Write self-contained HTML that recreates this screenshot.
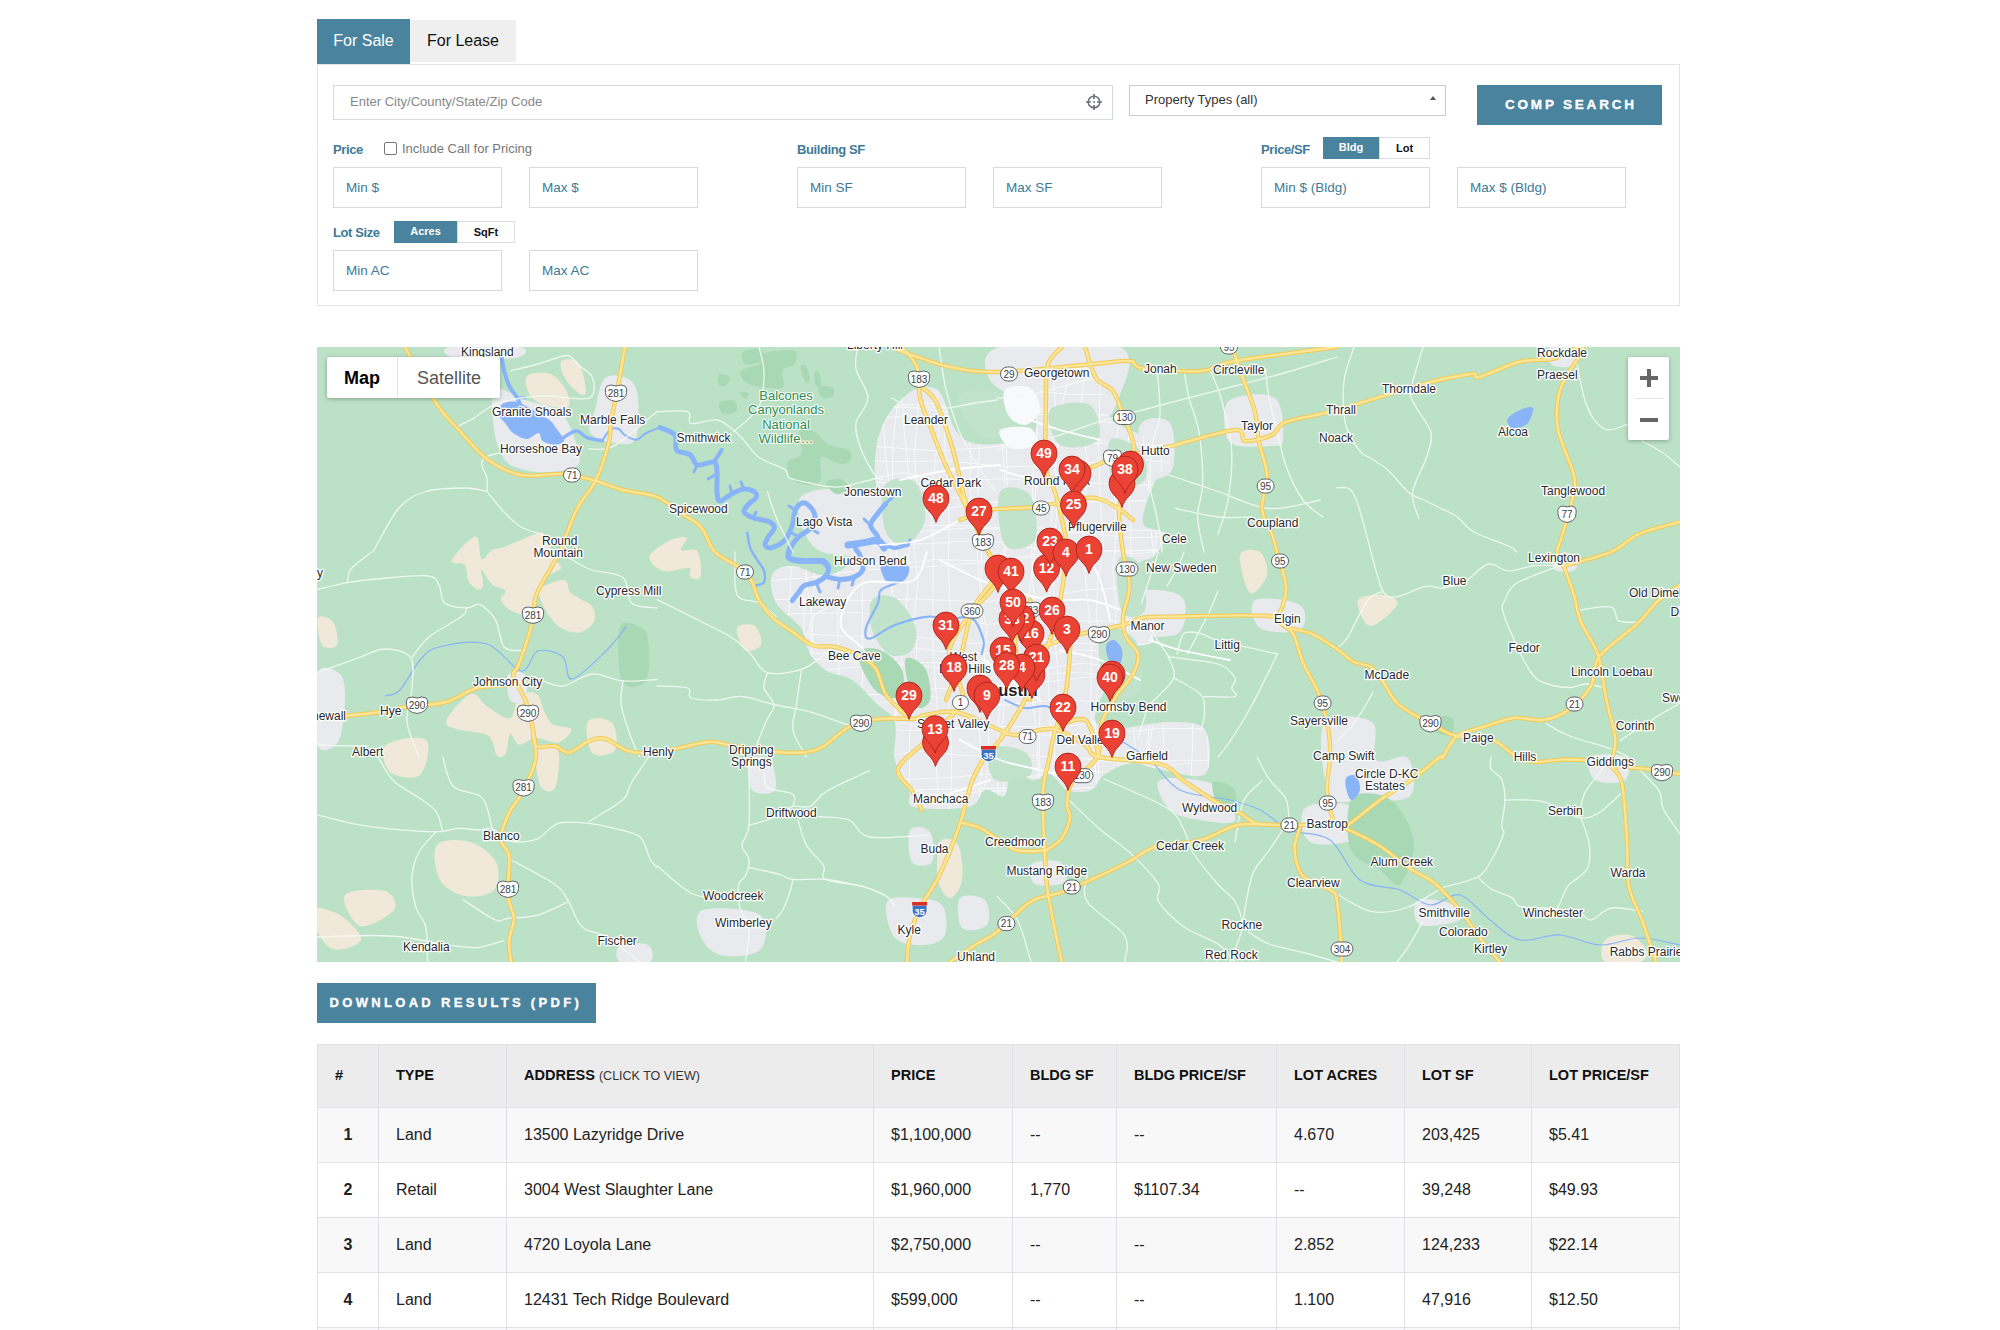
<!DOCTYPE html>
<html><head><meta charset="utf-8">
<style>
*{box-sizing:border-box;margin:0;padding:0}
html,body{width:2000px;height:1330px;overflow:hidden;background:#fff;font-family:"Liberation Sans",sans-serif}
.abs{position:absolute}
.tab{position:absolute;top:19px;height:45px;font-size:16px;line-height:44px;text-align:center}
.t1{left:317px;width:93px;background:#4a839e;color:#fff}
.t2{left:410px;width:106px;top:20px;height:42px;background:#efefef;color:#111;line-height:41px}
.panel{position:absolute;left:317px;top:64px;width:1363px;height:242px;border:1px solid #e3e5e8;border-top:1px solid #e3e5e8}
.inp{position:absolute;border:1px solid #d6d9dd;background:#fff}
.ph{position:absolute;font-size:13.5px;color:#3d7a97}
.lbl{position:absolute;font-size:13px;font-weight:bold;color:#3d7a97;letter-spacing:-0.4px;margin-top:1px}
.tg{position:absolute;height:22px;font-size:11px;font-weight:bold;text-align:center;line-height:21px}
.tgon{background:#4a839e;color:#fff}
.tgoff{background:#fff;color:#111;border:1px solid #dcdcdc}
.btn{position:absolute;background:#4a839e;color:#fff;font-weight:bold;font-size:13.5px;text-align:center;white-space:nowrap;-webkit-text-stroke:0.35px #fff}
#map{position:absolute;left:317px;top:347px;width:1363px;height:615px;background:#bbe2c6;overflow:hidden}
table{position:absolute;left:317px;top:1044px;border-collapse:collapse;width:1363px}
td,th{border:1px solid #dfe1e6;text-align:left;padding:0 0 0 17px}
th{background:#ececec;height:63px;font-size:14.5px;color:#111;padding-bottom:3px}
td{height:55px;font-size:16px;color:#222}
tr:nth-child(even) td{background:#f8f8f8}
tr:nth-child(odd) td{background:#fff}
td.n{text-align:center;padding:0;font-weight:bold}
th small{font-weight:normal;font-size:12.5px;color:#333}
</style></head><body>
<div class="tab t1">For Sale</div>
<div class="tab t2">For Lease</div>
<div class="panel"></div>

<div class="inp" style="left:333px;top:85px;width:780px;height:35px"></div>
<div class="ph" style="left:350px;top:94px;font-size:13px;color:#888">Enter City/County/State/Zip Code</div>
<svg class="abs" style="left:1085px;top:92.5px" width="18" height="18" viewBox="0 0 18 18"><circle cx="9" cy="9" r="5.8" fill="none" stroke="#6b7079" stroke-width="1.5"/><path d="M9 1v5M9 12v5M1 9h5M12 9h5" stroke="#6b7079" stroke-width="1.7"/><circle cx="9" cy="9" r="0.9" fill="#6b7079"/></svg>

<div class="inp" style="left:1129px;top:85px;width:317px;height:31px;border-color:#ccc"></div>
<div class="ph" style="left:1145px;top:92px;font-size:13px;color:#333">Property Types (all)</div>
<div class="abs" style="left:1430px;top:96px;width:0;height:0;border-left:3px solid transparent;border-right:3px solid transparent;border-bottom:4px solid #555"></div>

<div class="btn" style="left:1477px;top:85px;width:185px;height:40px;line-height:40px;letter-spacing:2.8px;text-indent:2.8px">COMP SEARCH</div>

<div class="lbl" style="left:333px;top:141px">Price</div>
<div class="abs" style="left:384px;top:142px;width:13px;height:13px;border:1px solid #777;border-radius:2px"></div>
<div class="ph" style="left:402px;top:141px;font-size:13px;color:#777">Include Call for Pricing</div>
<div class="lbl" style="left:797px;top:141px">Building SF</div>
<div class="lbl" style="left:1261px;top:141px">Price/SF</div>
<div class="tg tgon" style="left:1323px;top:137px;width:56px">Bldg</div>
<div class="tg tgoff" style="left:1379px;top:137px;width:51px">Lot</div>

<div class="inp" style="left:333px;top:167px;width:169px;height:41px"></div>
<div class="ph" style="left:346px;top:180px">Min $</div>
<div class="inp" style="left:529px;top:167px;width:169px;height:41px"></div>
<div class="ph" style="left:542px;top:180px">Max $</div>
<div class="inp" style="left:797px;top:167px;width:169px;height:41px"></div>
<div class="ph" style="left:810px;top:180px">Min SF</div>
<div class="inp" style="left:993px;top:167px;width:169px;height:41px"></div>
<div class="ph" style="left:1006px;top:180px">Max SF</div>
<div class="inp" style="left:1261px;top:167px;width:169px;height:41px"></div>
<div class="ph" style="left:1274px;top:180px">Min $ (Bldg)</div>
<div class="inp" style="left:1457px;top:167px;width:169px;height:41px"></div>
<div class="ph" style="left:1470px;top:180px">Max $ (Bldg)</div>

<div class="lbl" style="left:333px;top:224px">Lot Size</div>
<div class="tg tgon" style="left:394px;top:221px;width:63px">Acres</div>
<div class="tg tgoff" style="left:457px;top:221px;width:58px">SqFt</div>
<div class="inp" style="left:333px;top:250px;width:169px;height:41px"></div>
<div class="ph" style="left:346px;top:263px">Min AC</div>
<div class="inp" style="left:529px;top:250px;width:169px;height:41px"></div>
<div class="ph" style="left:542px;top:263px">Max AC</div>

<div id="map"><svg width="1363" height="615" viewBox="317 347 1363 615" style="position:absolute;left:0;top:0;display:block">
<rect x="317" y="347" width="1363" height="615" fill="#bbe2c6"/>
<path d="M527.0,376.0 C530.3,372.5 543.5,371.7 550.0,374.0 C556.5,376.3 563.0,384.5 566.0,390.0 C569.0,395.5 571.5,404.5 568.0,407.0 C564.5,409.5 551.3,407.0 545.0,405.0 C538.7,403.0 533.0,399.8 530.0,395.0 C527.0,390.2 523.7,379.5 527.0,376.0Z" fill="#f0e9d9"/>
<path d="M561.0,362.0 C563.0,359.0 573.8,357.3 578.0,362.0 C582.2,366.7 585.7,384.7 586.0,390.0 C586.3,395.3 583.3,395.7 580.0,394.0 C576.7,392.3 569.2,385.3 566.0,380.0 C562.8,374.7 559.0,365.0 561.0,362.0Z" fill="#f0e9d9"/>
<path d="M451.5,560.5 C453.2,555.8 470.5,536.8 475.5,536.5 C480.5,536.2 478.8,556.8 481.5,559.0 C484.2,561.2 488.2,552.0 492.0,550.0 C495.8,548.0 496.5,549.8 504.0,547.0 C511.5,544.2 530.2,535.5 537.0,533.5 C543.8,531.5 541.5,530.8 544.5,535.0 C547.5,539.2 552.2,553.5 555.0,559.0 C557.8,564.5 562.0,565.2 561.0,568.0 C560.0,570.8 552.5,572.2 549.0,575.5 C545.5,578.8 542.5,582.8 540.0,587.5 C537.5,592.2 535.5,599.2 534.0,604.0 C532.5,608.8 535.0,615.0 531.0,616.0 C527.0,617.0 515.0,612.8 510.0,610.0 C505.0,607.2 501.8,602.8 501.0,599.5 C500.2,596.2 507.0,593.0 505.5,590.5 C504.0,588.0 496.0,588.0 492.0,584.5 C488.0,581.0 483.0,569.2 481.5,569.5 C480.0,569.8 483.8,582.8 483.0,586.0 C482.2,589.2 479.5,590.0 477.0,589.0 C474.5,588.0 470.0,584.0 468.0,580.0 C466.0,576.0 467.8,568.2 465.0,565.0 C462.2,561.8 449.8,565.2 451.5,560.5Z" fill="#f0e9d9"/>
<path d="M540.0,589.0 C543.5,584.8 559.0,579.5 564.0,580.0 C569.0,580.5 567.5,589.0 570.0,592.0 C572.5,595.0 575.2,595.5 579.0,598.0 C582.8,600.5 590.0,603.0 592.5,607.0 C595.0,611.0 596.2,617.8 594.0,622.0 C591.8,626.2 584.5,631.5 579.0,632.5 C573.5,633.5 565.8,630.5 561.0,628.0 C556.2,625.5 553.5,621.2 550.5,617.5 C547.5,613.8 544.8,610.2 543.0,605.5 C541.2,600.8 536.5,593.2 540.0,589.0Z" fill="#f0e9d9"/>
<path d="M649.5,556.0 C651.0,550.8 665.8,542.5 672.0,539.5 C678.2,536.5 685.5,536.2 687.0,538.0 C688.5,539.8 679.2,547.8 681.0,550.0 C682.8,552.2 694.2,547.0 697.5,551.5 C700.8,556.0 701.8,572.8 700.5,577.0 C699.2,581.2 692.0,578.5 690.0,577.0 C688.0,575.5 693.0,569.0 688.5,568.0 C684.0,567.0 669.5,573.0 663.0,571.0 C656.5,569.0 648.0,561.2 649.5,556.0Z" fill="#f0e9d9"/>
<path d="M737.0,628.0 C738.7,624.0 751.0,623.2 755.0,626.0 C759.0,628.8 762.7,641.0 761.0,645.0 C759.3,649.0 749.0,652.8 745.0,650.0 C741.0,647.2 735.3,632.0 737.0,628.0Z" fill="#f0e9d9"/>
<path d="M318.0,618.0 C319.8,614.2 329.8,617.5 333.0,622.0 C336.2,626.5 338.8,641.2 337.0,645.0 C335.2,648.8 325.2,649.5 322.0,645.0 C318.8,640.5 316.2,621.8 318.0,618.0Z" fill="#f0e9d9"/>
<path d="M446.5,720.5 C448.7,714.6 463.7,696.2 470.6,694.0 C477.6,691.8 481.6,703.2 488.2,707.3 C494.8,711.3 505.1,720.1 510.2,718.3 C515.3,716.5 514.6,700.3 519.0,696.3 C523.4,692.2 532.1,691.0 536.5,694.0 C540.9,697.0 542.4,708.8 545.3,714.0 C548.2,719.2 549.6,722.5 554.0,725.0 C558.4,727.5 570.9,726.4 571.6,729.3 C572.3,732.2 564.2,740.9 558.4,742.4 C552.5,743.9 543.1,737.6 536.5,738.0 C529.9,738.4 523.4,745.3 519.0,744.6 C514.6,743.9 512.4,732.2 510.2,733.7 C508.0,735.2 508.0,749.8 505.8,753.4 C503.6,757.0 499.9,758.5 497.0,755.6 C494.1,752.7 494.8,740.2 488.2,735.8 C481.6,731.4 464.4,731.8 457.5,729.3 C450.6,726.8 444.3,726.4 446.5,720.5Z" fill="#f0e9d9"/>
<path d="M537.0,748.0 C540.0,742.2 555.0,743.3 558.0,750.0 C561.0,756.7 558.0,782.2 555.0,788.0 C552.0,793.8 543.0,791.7 540.0,785.0 C537.0,778.3 534.0,753.8 537.0,748.0Z" fill="#f0e9d9"/>
<path d="M588.0,721.0 C591.3,716.0 607.5,718.2 612.0,723.0 C616.5,727.8 618.3,745.0 615.0,750.0 C611.7,755.0 596.5,757.8 592.0,753.0 C587.5,748.2 584.7,726.0 588.0,721.0Z" fill="#f0e9d9"/>
<path d="M386.0,745.0 C392.0,739.7 420.3,735.0 426.0,740.0 C431.7,745.0 426.0,769.7 420.0,775.0 C414.0,780.3 395.7,777.0 390.0,772.0 C384.3,767.0 380.0,750.3 386.0,745.0Z" fill="#f0e9d9"/>
<path d="M437.0,845.0 C442.0,838.7 460.2,839.2 470.0,842.0 C479.8,844.8 492.0,854.0 496.0,862.0 C500.0,870.0 499.2,884.3 494.0,890.0 C488.8,895.7 474.0,897.7 465.0,896.0 C456.0,894.3 444.7,888.5 440.0,880.0 C435.3,871.5 432.0,851.3 437.0,845.0Z" fill="#f0e9d9"/>
<path d="M345.0,895.0 C349.2,889.2 376.8,888.5 385.0,891.0 C393.2,893.5 398.2,904.2 394.0,910.0 C389.8,915.8 368.2,928.5 360.0,926.0 C351.8,923.5 340.8,900.8 345.0,895.0Z" fill="#f0e9d9"/>
<path d="M310.0,910.0 C311.7,904.5 331.5,910.0 340.0,915.0 C348.5,920.0 362.7,934.5 361.0,940.0 C359.3,945.5 338.5,953.0 330.0,948.0 C321.5,943.0 308.3,915.5 310.0,910.0Z" fill="#f0e9d9"/>
<path d="M1240.0,555.0 C1241.7,548.2 1255.5,548.7 1260.0,552.0 C1264.5,555.3 1268.7,568.2 1267.0,575.0 C1265.3,581.8 1254.5,596.3 1250.0,593.0 C1245.5,589.7 1238.3,561.8 1240.0,555.0Z" fill="#f0e9d9"/>
<path d="M1358.0,600.0 C1360.5,594.8 1378.5,594.2 1385.0,595.0 C1391.5,595.8 1399.5,599.8 1397.0,605.0 C1394.5,610.2 1376.5,626.8 1370.0,626.0 C1363.5,625.2 1355.5,605.2 1358.0,600.0Z" fill="#f0e9d9"/>
<path d="M1605.0,940.0 C1609.2,935.5 1623.2,933.3 1630.0,935.0 C1636.8,936.7 1644.3,945.5 1646.0,950.0 C1647.7,954.5 1646.8,960.0 1640.0,962.0 C1633.2,964.0 1610.8,965.7 1605.0,962.0 C1599.2,958.3 1600.8,944.5 1605.0,940.0Z" fill="#f0e9d9"/>
<path d="M940.0,842.0 C943.3,836.2 954.3,838.7 958.0,845.0 C961.7,851.3 963.3,871.2 962.0,880.0 C960.7,888.8 954.0,898.0 950.0,898.0 C946.0,898.0 939.7,889.3 938.0,880.0 C936.3,870.7 936.7,847.8 940.0,842.0Z" fill="#f0e9d9"/>
<path d="M912.0,391.0 C920.9,386.2 931.3,384.4 938.6,391.0 C945.9,397.6 949.4,421.9 956.0,430.7 C962.6,439.5 967.0,442.5 978.0,444.0 C989.0,445.5 1012.8,442.8 1022.0,439.5 C1031.2,436.2 1029.3,433.9 1033.0,424.0 C1036.7,414.1 1038.5,389.9 1044.0,380.0 C1049.5,370.1 1056.8,365.7 1066.0,364.6 C1075.2,363.5 1092.3,365.3 1099.0,373.4 C1105.7,381.5 1100.5,403.4 1106.0,413.0 C1111.5,422.6 1124.0,426.3 1132.0,430.7 C1140.0,435.1 1147.3,435.1 1154.0,439.5 C1160.7,443.9 1172.0,449.6 1172.0,457.0 C1172.0,464.4 1158.8,472.6 1154.0,483.6 C1149.2,494.6 1141.1,514.6 1143.0,523.0 C1144.9,531.4 1163.7,528.5 1165.5,534.0 C1167.3,539.5 1158.8,550.5 1154.0,556.0 C1149.2,561.5 1139.8,557.8 1137.0,567.0 C1134.2,576.2 1134.2,598.8 1137.0,611.0 C1139.8,623.2 1155.2,633.5 1154.0,640.0 C1152.8,646.5 1137.3,643.3 1130.0,650.0 C1122.7,656.7 1115.8,668.3 1110.0,680.0 C1104.2,691.7 1093.3,712.0 1095.0,720.0 C1096.7,728.0 1107.5,727.7 1120.0,728.0 C1132.5,728.3 1155.8,721.7 1170.0,722.0 C1184.2,722.3 1199.2,721.3 1205.0,730.0 C1210.8,738.7 1212.7,767.5 1205.0,774.0 C1197.3,780.5 1171.2,770.8 1159.0,769.0 C1146.8,767.2 1141.0,762.2 1132.0,763.0 C1123.0,763.8 1111.8,769.5 1105.0,774.0 C1098.2,778.5 1097.3,787.3 1091.0,790.0 C1084.7,792.7 1073.8,792.7 1067.0,790.0 C1060.2,787.3 1055.5,775.7 1050.0,774.0 C1044.5,772.3 1040.3,780.0 1034.0,780.0 C1027.7,780.0 1017.0,771.3 1012.0,774.0 C1007.0,776.7 1008.5,793.3 1004.0,796.0 C999.5,798.7 990.8,788.2 985.0,790.0 C979.2,791.8 980.8,804.2 969.0,807.0 C957.2,809.8 924.0,809.8 914.0,807.0 C904.0,804.2 912.2,797.8 909.0,790.0 C905.8,782.2 897.3,771.3 895.0,760.0 C892.7,748.7 897.8,731.2 895.0,722.0 C892.2,712.8 885.2,712.0 878.0,705.0 C870.8,698.0 860.5,685.7 852.0,680.0 C843.5,674.3 834.0,675.3 827.0,671.0 C820.0,666.7 814.3,661.2 810.0,654.0 C805.7,646.8 806.7,636.5 801.0,628.0 C795.3,619.5 780.8,611.8 776.0,603.0 C771.2,594.2 769.3,581.2 772.0,575.0 C774.7,568.8 782.3,566.0 792.0,566.0 C801.7,566.0 817.0,578.0 830.0,575.0 C843.0,572.0 858.3,557.2 870.0,548.0 C881.7,538.8 898.3,528.0 900.0,520.0 C901.7,512.0 884.2,510.0 880.0,500.0 C875.8,490.0 874.2,473.3 875.0,460.0 C875.8,446.7 878.8,431.5 885.0,420.0 C891.2,408.5 903.1,395.8 912.0,391.0Z" fill="#e8eaed"/>
<path d="M878.0,437.0 C880.5,432.7 894.3,434.7 898.0,440.0 C901.7,445.3 902.5,464.7 900.0,469.0 C897.5,473.3 886.7,471.3 883.0,466.0 C879.3,460.7 875.5,441.3 878.0,437.0Z" fill="#e8eaed"/>
<path d="M882.0,467.0 C883.8,465.2 892.8,466.0 895.0,468.0 C897.2,470.0 896.8,477.2 895.0,479.0 C893.2,480.8 886.2,481.0 884.0,479.0 C881.8,477.0 880.2,468.8 882.0,467.0Z" fill="#e8eaed"/>
<path d="M800.0,498.0 C806.3,488.5 835.0,487.7 850.0,488.0 C865.0,488.3 879.7,493.0 890.0,500.0 C900.3,507.0 909.5,521.3 912.0,530.0 C914.5,538.7 915.3,547.7 905.0,552.0 C894.7,556.3 865.5,557.2 850.0,556.0 C834.5,554.8 820.3,554.7 812.0,545.0 C803.7,535.3 793.7,507.5 800.0,498.0Z" fill="#e8eaed"/>
<path d="M910.0,830.0 C913.0,825.0 926.3,826.7 930.0,832.0 C933.7,837.3 935.0,857.0 932.0,862.0 C929.0,867.0 915.7,867.3 912.0,862.0 C908.3,856.7 907.0,835.0 910.0,830.0Z" fill="#e8eaed"/>
<path d="M887.0,902.0 C890.3,895.3 905.8,897.5 915.0,898.0 C924.2,898.5 937.0,898.8 942.0,905.0 C947.0,911.2 947.8,928.3 945.0,935.0 C942.2,941.7 933.3,944.5 925.0,945.0 C916.7,945.5 901.3,945.2 895.0,938.0 C888.7,930.8 883.7,908.7 887.0,902.0Z" fill="#e8eaed"/>
<path d="M960.0,898.0 C963.8,893.3 980.5,895.5 985.0,900.0 C989.5,904.5 990.8,920.3 987.0,925.0 C983.2,929.7 966.5,932.5 962.0,928.0 C957.5,923.5 956.2,902.7 960.0,898.0Z" fill="#e8eaed"/>
<path d="M605.0,378.0 C610.8,373.0 624.5,376.3 630.0,380.0 C635.5,383.7 637.2,390.0 638.0,400.0 C638.8,410.0 639.7,433.0 635.0,440.0 C630.3,447.0 617.5,443.3 610.0,442.0 C602.5,440.7 592.5,437.3 590.0,432.0 C587.5,426.7 592.5,419.0 595.0,410.0 C597.5,401.0 599.2,383.0 605.0,378.0Z" fill="#e8eaed"/>
<path d="M495.0,390.0 C500.2,385.0 514.2,396.3 525.0,400.0 C535.8,403.7 551.7,405.3 560.0,412.0 C568.3,418.7 572.0,431.2 575.0,440.0 C578.0,448.8 582.2,459.7 578.0,465.0 C573.8,470.3 558.8,471.2 550.0,472.0 C541.2,472.8 532.5,472.0 525.0,470.0 C517.5,468.0 510.2,466.7 505.0,460.0 C499.8,453.3 495.7,441.7 494.0,430.0 C492.3,418.3 489.8,395.0 495.0,390.0Z" fill="#e8eaed"/>
<path d="M450.0,347.0 C460.8,345.2 509.2,345.2 520.0,347.0 C530.8,348.8 525.8,356.2 515.0,358.0 C504.2,359.8 465.8,359.8 455.0,358.0 C444.2,356.2 439.2,348.8 450.0,347.0Z" fill="#e8eaed"/>
<path d="M1000.0,347.0 C1021.7,341.5 1100.3,338.2 1120.0,347.0 C1139.7,355.8 1123.0,385.2 1118.0,400.0 C1113.0,414.8 1099.7,432.7 1090.0,436.0 C1080.3,439.3 1070.0,425.2 1060.0,420.0 C1050.0,414.8 1041.7,411.7 1030.0,405.0 C1018.3,398.3 995.0,389.7 990.0,380.0 C985.0,370.3 978.3,352.5 1000.0,347.0Z" fill="#e8eaed"/>
<path d="M1230.0,400.0 C1238.3,394.7 1266.2,391.3 1275.0,398.0 C1283.8,404.7 1283.8,432.0 1283.0,440.0 C1282.2,448.0 1278.0,445.2 1270.0,446.0 C1262.0,446.8 1242.5,447.7 1235.0,445.0 C1227.5,442.3 1225.8,437.5 1225.0,430.0 C1224.2,422.5 1221.7,405.3 1230.0,400.0Z" fill="#e8eaed"/>
<path d="M1140.0,425.0 C1144.2,416.3 1164.7,415.5 1170.0,423.0 C1175.3,430.5 1176.2,461.3 1172.0,470.0 C1167.8,478.7 1150.3,482.5 1145.0,475.0 C1139.7,467.5 1135.8,433.7 1140.0,425.0Z" fill="#e8eaed"/>
<path d="M1130.0,595.0 C1134.2,589.2 1151.0,589.2 1160.0,590.0 C1169.0,590.8 1180.7,593.0 1184.0,600.0 C1187.3,607.0 1185.7,626.0 1180.0,632.0 C1174.3,638.0 1157.5,637.2 1150.0,636.0 C1142.5,634.8 1138.3,631.8 1135.0,625.0 C1131.7,618.2 1125.8,600.8 1130.0,595.0Z" fill="#e8eaed"/>
<path d="M1255.0,600.0 C1261.7,596.2 1292.5,600.0 1300.0,605.0 C1307.5,610.0 1306.7,626.2 1300.0,630.0 C1293.3,633.8 1267.5,633.0 1260.0,628.0 C1252.5,623.0 1248.3,603.8 1255.0,600.0Z" fill="#e8eaed"/>
<path d="M1324.0,724.0 C1331.0,711.8 1363.3,716.0 1372.0,722.0 C1380.7,728.0 1370.0,754.0 1376.0,760.0 C1382.0,766.0 1402.3,752.0 1408.0,758.0 C1413.7,764.0 1417.2,789.0 1410.0,796.0 C1402.8,803.0 1378.3,800.2 1365.0,800.0 C1351.7,799.8 1336.8,807.7 1330.0,795.0 C1323.2,782.3 1317.0,736.2 1324.0,724.0Z" fill="#e8eaed"/>
<path d="M1305.0,808.0 C1311.7,802.0 1341.5,801.0 1350.0,806.0 C1358.5,811.0 1362.7,832.0 1356.0,838.0 C1349.3,844.0 1318.5,847.0 1310.0,842.0 C1301.5,837.0 1298.3,814.0 1305.0,808.0Z" fill="#e8eaed"/>
<path d="M1160.0,780.0 C1167.5,775.8 1202.5,778.3 1215.0,785.0 C1227.5,791.7 1237.5,814.2 1235.0,820.0 C1232.5,825.8 1210.8,821.7 1200.0,820.0 C1189.2,818.3 1176.7,816.7 1170.0,810.0 C1163.3,803.3 1152.5,784.2 1160.0,780.0Z" fill="#e8eaed"/>
<path d="M1418.0,900.0 C1423.8,896.7 1448.0,901.7 1455.0,905.0 C1462.0,908.3 1465.8,916.7 1460.0,920.0 C1454.2,923.3 1427.0,928.3 1420.0,925.0 C1413.0,921.7 1412.2,903.3 1418.0,900.0Z" fill="#e8eaed"/>
<path d="M703.0,910.0 C713.0,906.7 750.5,908.3 760.0,915.0 C769.5,921.7 766.7,943.3 760.0,950.0 C753.3,956.7 730.0,957.5 720.0,955.0 C710.0,952.5 702.8,942.5 700.0,935.0 C697.2,927.5 693.0,913.3 703.0,910.0Z" fill="#e8eaed"/>
<path d="M750.0,760.0 C753.0,755.0 765.8,755.0 770.0,760.0 C774.2,765.0 778.0,785.0 775.0,790.0 C772.0,795.0 756.2,795.0 752.0,790.0 C747.8,785.0 747.0,765.0 750.0,760.0Z" fill="#e8eaed"/>
<path d="M1032.0,864.0 C1036.2,860.3 1054.5,859.0 1060.0,862.0 C1065.5,865.0 1069.2,878.3 1065.0,882.0 C1060.8,885.7 1040.5,887.0 1035.0,884.0 C1029.5,881.0 1027.8,867.7 1032.0,864.0Z" fill="#e8eaed"/>
<path d="M620.0,945.0 C624.7,942.2 643.0,942.2 648.0,945.0 C653.0,947.8 654.7,959.2 650.0,962.0 C645.3,964.8 625.0,964.8 620.0,962.0 C615.0,959.2 615.3,947.8 620.0,945.0Z" fill="#e8eaed"/>
<path d="M508.0,675.0 C510.5,670.8 522.2,670.8 525.0,675.0 C527.8,679.2 527.5,695.8 525.0,700.0 C522.5,704.2 512.8,704.2 510.0,700.0 C507.2,695.8 505.5,679.2 508.0,675.0Z" fill="#e8eaed"/>
<path d="M317.0,674.0 C320.8,662.3 335.3,669.7 340.0,674.0 C344.7,678.3 345.3,688.7 345.0,700.0 C344.7,711.3 342.7,734.7 338.0,742.0 C333.3,749.3 320.5,755.3 317.0,744.0 C313.5,732.7 313.2,685.7 317.0,674.0Z" fill="#e8eaed"/>
<path d="M1550.0,347.0 C1553.8,344.0 1570.8,344.0 1575.0,347.0 C1579.2,350.0 1578.8,362.0 1575.0,365.0 C1571.2,368.0 1556.2,368.0 1552.0,365.0 C1547.8,362.0 1546.2,350.0 1550.0,347.0Z" fill="#e8eaed"/>
<path d="M1555.0,555.0 C1558.3,552.5 1571.7,552.5 1575.0,555.0 C1578.3,557.5 1578.3,567.5 1575.0,570.0 C1571.7,572.5 1558.3,572.5 1555.0,570.0 C1551.7,567.5 1551.7,557.5 1555.0,555.0Z" fill="#e8eaed"/>
<path d="M1590.0,757.0 C1595.0,753.2 1619.2,753.2 1625.0,757.0 C1630.8,760.8 1630.0,776.2 1625.0,780.0 C1620.0,783.8 1600.8,783.8 1595.0,780.0 C1589.2,776.2 1585.0,760.8 1590.0,757.0Z" fill="#e8eaed"/>
<clipPath id="austin"><path d="M912.0,391.0 C920.9,386.2 931.3,384.4 938.6,391.0 C945.9,397.6 949.4,421.9 956.0,430.7 C962.6,439.5 967.0,442.5 978.0,444.0 C989.0,445.5 1012.8,442.8 1022.0,439.5 C1031.2,436.2 1029.3,433.9 1033.0,424.0 C1036.7,414.1 1038.5,389.9 1044.0,380.0 C1049.5,370.1 1056.8,365.7 1066.0,364.6 C1075.2,363.5 1092.3,365.3 1099.0,373.4 C1105.7,381.5 1100.5,403.4 1106.0,413.0 C1111.5,422.6 1124.0,426.3 1132.0,430.7 C1140.0,435.1 1147.3,435.1 1154.0,439.5 C1160.7,443.9 1172.0,449.6 1172.0,457.0 C1172.0,464.4 1158.8,472.6 1154.0,483.6 C1149.2,494.6 1141.1,514.6 1143.0,523.0 C1144.9,531.4 1163.7,528.5 1165.5,534.0 C1167.3,539.5 1158.8,550.5 1154.0,556.0 C1149.2,561.5 1139.8,557.8 1137.0,567.0 C1134.2,576.2 1134.2,598.8 1137.0,611.0 C1139.8,623.2 1155.2,633.5 1154.0,640.0 C1152.8,646.5 1137.3,643.3 1130.0,650.0 C1122.7,656.7 1115.8,668.3 1110.0,680.0 C1104.2,691.7 1093.3,712.0 1095.0,720.0 C1096.7,728.0 1107.5,727.7 1120.0,728.0 C1132.5,728.3 1155.8,721.7 1170.0,722.0 C1184.2,722.3 1199.2,721.3 1205.0,730.0 C1210.8,738.7 1212.7,767.5 1205.0,774.0 C1197.3,780.5 1171.2,770.8 1159.0,769.0 C1146.8,767.2 1141.0,762.2 1132.0,763.0 C1123.0,763.8 1111.8,769.5 1105.0,774.0 C1098.2,778.5 1097.3,787.3 1091.0,790.0 C1084.7,792.7 1073.8,792.7 1067.0,790.0 C1060.2,787.3 1055.5,775.7 1050.0,774.0 C1044.5,772.3 1040.3,780.0 1034.0,780.0 C1027.7,780.0 1017.0,771.3 1012.0,774.0 C1007.0,776.7 1008.5,793.3 1004.0,796.0 C999.5,798.7 990.8,788.2 985.0,790.0 C979.2,791.8 980.8,804.2 969.0,807.0 C957.2,809.8 924.0,809.8 914.0,807.0 C904.0,804.2 912.2,797.8 909.0,790.0 C905.8,782.2 897.3,771.3 895.0,760.0 C892.7,748.7 897.8,731.2 895.0,722.0 C892.2,712.8 885.2,712.0 878.0,705.0 C870.8,698.0 860.5,685.7 852.0,680.0 C843.5,674.3 834.0,675.3 827.0,671.0 C820.0,666.7 814.3,661.2 810.0,654.0 C805.7,646.8 806.7,636.5 801.0,628.0 C795.3,619.5 780.8,611.8 776.0,603.0 C771.2,594.2 769.3,581.2 772.0,575.0 C774.7,568.8 782.3,566.0 792.0,566.0 C801.7,566.0 817.0,578.0 830.0,575.0 C843.0,572.0 858.3,557.2 870.0,548.0 C881.7,538.8 898.3,528.0 900.0,520.0 C901.7,512.0 884.2,510.0 880.0,500.0 C875.8,490.0 874.2,473.3 875.0,460.0 C875.8,446.7 878.8,431.5 885.0,420.0 C891.2,408.5 903.1,395.8 912.0,391.0Z"/></clipPath>
<g clip-path="url(#austin)" fill="none" stroke="#fafbfc" stroke-width="1" opacity="0.85">
<path d="M760.0,358.2 L790.3,360.0 L817.8,360.5 L855.6,355.2 L898.4,349.6 L938.6,344.5 L966.7,343.6 L1020.7,339.0 L1053.5,340.6 L1111.6,341.5 L1150.5,347.2 L1177.2,351.5 L1212.3,347.2"/>
<path d="M760.0,378.2 L791.3,379.1 L838.7,377.6 L882.9,372.4 L909.9,368.8 L958.8,368.0 L994.8,369.0 L1035.6,366.6 L1088.4,369.0 L1122.0,369.9 L1165.3,374.4 L1215.9,371.8"/>
<path d="M760.0,389.2 L811.5,385.0 L853.6,379.5 L902.0,382.7 L947.1,387.2 L983.0,389.5 L1028.8,390.5 L1069.8,394.5 L1127.9,394.2 L1176.1,389.0"/>
<path d="M760.0,409.9 L813.8,407.3 L852.3,409.4 L878.1,408.9 L908.9,404.3 L936.0,407.5 L965.5,404.5 L1004.2,409.0 L1032.0,408.4 L1076.3,413.0 L1129.9,417.3 L1164.7,416.3 L1202.2,420.9"/>
<path d="M760.0,416.8 L793.1,413.6 L835.1,414.6 L869.3,408.7 L909.0,407.1 L953.8,412.5 L1002.9,412.7 L1049.6,414.8 L1076.4,419.6 L1128.7,424.1 L1181.7,422.8"/>
<path d="M760.0,436.3 L787.2,431.2 L819.5,427.1 L856.4,421.7 L881.4,417.5 L909.9,415.9 L935.8,420.4 L982.3,416.2 L1016.2,414.4 L1053.9,409.8 L1108.6,415.7 L1149.9,415.5 L1177.9,410.8 L1214.9,408.0"/>
<path d="M760.0,445.2 L818.3,445.6 L848.4,446.1 L874.4,446.4 L933.6,450.8 L983.0,447.9 L1020.8,443.9 L1072.8,444.3 L1125.1,442.3 L1157.9,446.0 L1217.4,450.2"/>
<path d="M760.0,467.4 L792.9,467.6 L830.4,462.0 L856.4,459.3 L890.4,461.6 L948.9,461.0 L1006.7,466.8 L1065.1,465.2 L1097.8,461.9 L1129.7,458.4 L1176.6,463.2"/>
<path d="M760.0,481.5 L813.0,476.5 L861.1,481.5 L913.5,484.5 L955.2,480.6 L1007.8,478.6 L1060.9,484.3 L1099.7,483.1 L1157.9,485.8 L1188.8,481.3 L1219.1,486.2"/>
<path d="M760.0,498.3 L819.3,500.2 L856.6,500.7 L886.2,494.9 L945.1,496.7 L988.6,501.9 L1028.8,506.4 L1082.7,502.9 L1116.5,500.4 L1149.9,501.5 L1184.0,500.5 L1213.6,505.4"/>
<path d="M760.0,510.8 L816.7,509.9 L873.8,509.9 L917.4,510.2 L943.0,509.5 L974.4,503.5 L1027.4,499.6 L1069.0,502.3 L1113.5,500.2 L1156.6,500.9 L1209.1,496.1"/>
<path d="M760.0,522.8 L812.0,522.9 L856.7,526.0 L913.6,525.3 L960.1,525.4 L1003.0,527.7 L1043.8,528.1 L1085.6,533.4 L1135.0,537.9 L1193.0,535.0"/>
<path d="M760.0,543.4 L789.8,538.9 L830.3,533.7 L863.7,528.6 L912.1,532.0 L968.5,527.9 L1018.6,529.8 L1048.6,534.4 L1107.5,531.0 L1165.8,529.8 L1207.8,535.7"/>
<path d="M760.0,554.3 L803.0,552.4 L834.9,550.2 L885.2,544.4 L929.6,543.7 L955.2,541.7 L1002.0,541.9 L1029.3,547.7 L1081.9,553.3 L1110.5,550.5 L1136.9,553.9 L1171.4,549.4 L1211.2,554.4"/>
<path d="M760.0,566.5 L817.2,567.3 L866.7,562.4 L893.7,564.7 L933.6,559.5 L991.4,561.2 L1044.5,556.2 L1099.5,551.0 L1154.6,550.4 L1191.5,551.0"/>
<path d="M760.0,581.3 L803.4,578.2 L832.3,574.1 L859.0,570.5 L895.0,568.2 L946.5,565.7 L989.0,561.8 L1026.2,556.0 L1060.0,550.2 L1110.6,550.8 L1142.2,550.5 L1200.0,545.8"/>
<path d="M760.0,600.0 L814.2,598.7 L856.9,600.9 L916.3,599.0 L970.5,601.5 L1017.7,600.4 L1054.9,595.0 L1084.4,589.9 L1135.4,586.9 L1166.1,582.0"/>
<path d="M760.0,616.7 L794.9,613.6 L830.1,613.1 L860.6,612.5 L894.9,618.0 L953.9,618.6 L987.4,624.2 L1023.3,622.4 L1048.3,621.0 L1089.9,621.1 L1122.0,621.1 L1147.1,618.3 L1175.3,617.1 L1201.7,611.4"/>
<path d="M760.0,630.9 L803.5,633.9 L851.5,636.5 L907.3,635.1 L943.7,640.9 L973.9,643.6 L1021.5,638.2 L1075.7,642.9 L1122.7,645.7 L1176.1,641.3 L1219.4,641.4"/>
<path d="M760.0,648.3 L805.4,653.0 L854.3,655.3 L887.4,649.7 L917.0,648.0 L945.7,652.0 L990.3,653.6 L1037.2,655.7 L1079.3,649.8 L1132.2,652.8 L1174.8,653.2"/>
<path d="M760.0,662.4 L793.8,657.3 L828.1,660.0 L860.3,662.9 L919.5,662.8 L957.8,662.6 L1006.8,665.8 L1053.4,667.5 L1081.1,663.3 L1115.0,666.2 L1150.6,667.0 L1176.1,661.7 L1210.5,663.8"/>
<path d="M760.0,672.9 L803.1,672.5 L844.4,667.9 L900.7,664.3 L959.9,669.5 L985.5,669.0 L1039.2,674.7 L1080.0,671.9 L1112.3,677.2 L1144.7,678.2 L1174.6,678.5"/>
<path d="M760.0,693.2 L802.8,697.8 L852.4,694.6 L908.8,694.5 L934.7,688.5 L976.9,687.9 L1012.5,683.6 L1049.5,681.4 L1103.9,675.4 L1155.2,679.5 L1184.4,684.6"/>
<path d="M760.0,702.9 L798.0,701.6 L858.0,702.7 L895.6,701.8 L930.2,696.4 L958.8,700.4 L993.8,705.6 L1027.5,702.8 L1070.4,699.1 L1108.5,704.6 L1164.4,708.3 L1211.5,713.3"/>
<path d="M760.0,722.2 L786.7,725.0 L827.5,728.0 L875.1,725.5 L901.8,730.6 L931.2,730.2 L968.3,727.8 L1019.1,733.5 L1053.2,735.4 L1088.8,736.1 L1127.6,732.1 L1158.2,728.6 L1214.9,728.6"/>
<path d="M760.0,740.0 L800.7,735.6 L832.5,730.7 L869.5,725.8 L902.8,722.9 L947.8,727.6 L999.0,726.5 L1038.5,726.8 L1076.7,724.9 L1103.8,722.2 L1162.7,717.7 L1205.3,719.3"/>
<path d="M760.0,747.7 L793.7,746.5 L834.3,752.0 L889.0,756.4 L914.8,750.8 L964.6,755.6 L1006.2,756.6 L1031.2,755.3 L1088.6,759.2 L1143.6,764.9 L1177.2,760.2 L1207.7,760.5"/>
<path d="M760.0,767.2 L807.7,770.4 L848.7,771.0 L875.0,774.4 L908.2,779.4 L955.8,777.1 L985.3,774.1 L1032.5,776.5 L1061.5,771.3 L1104.8,772.3 L1143.4,769.0 L1189.4,763.1"/>
<path d="M760.0,784.6 L807.6,789.2 L849.2,786.0 L882.8,791.5 L932.5,789.2 L958.3,789.2 L1006.9,788.2 L1040.9,790.3 L1098.3,787.0 L1124.5,785.0 L1164.2,787.2 L1196.1,790.8"/>
<path d="M760.0,792.1 L818.9,789.8 L872.6,786.6 L905.4,789.7 L940.7,795.1 L983.1,791.4 L1015.9,790.4 L1064.2,795.7 L1094.3,794.5 L1126.7,800.2 L1156.7,794.8 L1183.8,793.5"/>
<path d="M760.0,812.3 L819.9,817.5 L856.4,813.7 L914.2,816.7 L940.3,818.7 L978.6,817.1 L1015.2,813.2 L1040.3,810.5 L1077.6,816.0 L1106.9,821.6 L1139.2,819.9 L1192.9,823.7"/>
<path d="M760.0,824.7 L798.0,829.8 L829.8,828.1 L886.2,822.5 L925.6,826.2 L977.4,820.7 L1003.6,815.5 L1060.8,812.6 L1112.0,817.4 L1148.9,814.6 L1207.4,816.0"/>
<path d="M760.0,838.2 L794.6,832.2 L846.1,837.2 L893.3,842.5 L919.1,839.3 L960.8,844.8 L1019.2,843.5 L1052.9,842.6 L1095.2,847.7 L1126.6,851.4 L1177.5,855.3"/>
<path d="M760.0,853.3 L796.2,851.6 L848.6,846.6 L880.5,849.6 L914.1,844.4 L940.3,845.0 L976.7,850.8 L1032.6,856.6 L1066.9,851.6 L1095.3,851.6 L1145.1,851.0 L1178.3,850.0"/>
<path d="M760.0,872.5 L814.6,874.5 L843.9,878.5 L879.2,879.3 L917.2,882.2 L949.2,879.2 L982.8,875.0 L1038.7,876.0 L1075.1,874.7 L1134.9,874.8 L1168.0,878.5 L1215.8,884.4"/>
<path d="M760.0,888.2 L814.4,893.2 L840.8,890.7 L870.0,887.0 L929.1,888.0 L986.6,886.4 L1041.9,885.8 L1076.0,889.2 L1134.1,884.4 L1180.0,885.9 L1212.6,884.3"/>
<path d="M760.0,897.5 L806.0,899.4 L838.1,893.5 L874.6,895.6 L906.0,893.4 L938.2,896.9 L982.3,891.7 L1010.9,890.4 L1055.1,892.1 L1083.3,888.1 L1132.7,887.0 L1167.6,884.7"/>
<path d="M760.0,915.7 L797.5,914.7 L852.7,920.6 L890.5,917.0 L941.0,913.4 L966.2,918.3 L1006.0,922.1 L1045.2,926.7 L1086.3,922.6 L1111.9,923.3 L1159.3,928.2 L1187.4,929.6"/>
<path d="M760.0,926.5 L794.9,926.7 L852.3,922.0 L894.5,925.7 L953.3,922.0 L982.7,927.4 L1041.9,927.2 L1068.8,932.3 L1107.3,937.1 L1154.0,941.0 L1184.7,944.4 L1217.4,943.3"/>
<path d="M760.0,941.8 L792.6,940.6 L835.8,939.2 L865.1,936.2 L915.4,941.0 L941.9,941.7 L993.4,936.2 L1047.7,931.6 L1093.7,932.2 L1140.7,929.9 L1180.4,930.8"/>
<path d="M769.5,350.0 L763.7,390.3 L763.6,437.0 L766.8,470.2 L766.3,522.5 L766.0,553.8 L761.5,582.6 L756.6,622.6 L756.7,663.1 L758.4,689.5 L761.2,717.4 L761.3,769.6 L761.4,796.5 L766.8,834.8 L771.0,864.5 L773.8,924.4"/>
<path d="M789.8,350.0 L795.3,392.2 L791.3,449.3 L796.4,501.9 L794.7,529.2 L790.6,580.6 L787.9,637.0 L783.6,690.6 L788.6,733.1 L785.8,765.4 L783.6,808.1 L779.8,834.4 L785.0,865.1 L789.8,913.9 L793.2,944.8"/>
<path d="M801.4,350.0 L805.8,387.6 L806.8,432.0 L802.1,487.9 L803.6,547.7 L807.2,586.5 L813.1,620.7 L811.4,665.9 L810.7,717.7 L813.6,748.9 L817.5,775.6 L819.1,809.5 L820.2,868.9 L817.9,917.1 L812.3,942.2"/>
<path d="M814.3,350.0 L819.1,392.9 L815.8,422.6 L810.1,470.4 L808.3,495.5 L806.6,524.2 L807.6,557.1 L804.1,602.7 L803.8,649.5 L809.0,679.3 L804.8,712.8 L806.5,741.1 L809.8,796.6 L807.0,835.7 L808.7,861.1 L807.0,905.8 L806.3,953.4"/>
<path d="M827.5,350.0 L822.0,406.6 L820.9,450.2 L815.6,483.5 L809.7,535.8 L815.0,580.1 L811.4,610.1 L811.5,656.3 L815.3,703.8 L813.0,734.9 L807.6,770.4 L811.0,826.6 L805.0,876.6 L808.0,931.1"/>
<path d="M844.5,350.0 L839.8,382.9 L834.3,416.0 L837.2,452.8 L841.4,502.1 L838.6,552.0 L837.8,596.4 L838.1,649.0 L839.8,683.3 L836.4,742.1 L830.6,797.9 L827.4,832.0 L832.8,883.0 L830.7,934.1"/>
<path d="M857.4,350.0 L859.0,406.8 L860.9,456.0 L860.6,515.3 L862.9,569.7 L862.2,624.7 L863.0,675.0 L859.6,710.8 L854.5,757.6 L850.3,814.5 L845.5,840.4 L843.7,897.9 L838.0,927.9 L840.3,954.4"/>
<path d="M877.4,350.0 L878.5,377.3 L882.3,415.0 L887.0,468.7 L891.4,496.0 L896.7,553.0 L893.2,581.8 L887.6,610.7 L891.3,665.4 L895.2,712.6 L892.7,759.7 L887.9,788.2 L884.3,839.7 L883.4,875.8 L880.5,901.6 L883.1,936.5"/>
<path d="M894.6,350.0 L898.9,392.6 L893.2,439.3 L892.5,478.7 L890.6,530.8 L891.1,580.4 L895.4,613.0 L899.3,641.2 L893.3,672.2 L896.4,704.2 L890.5,763.5 L890.4,805.6 L886.6,858.5 L884.8,900.8 L881.9,955.0"/>
<path d="M902.1,350.0 L902.1,399.5 L903.8,428.3 L907.2,456.2 L910.7,505.6 L908.9,552.5 L907.7,591.6 L902.7,647.7 L897.0,703.8 L894.2,736.1 L894.2,792.6 L898.8,830.9 L898.3,864.1 L901.4,907.7 L903.1,959.0"/>
<path d="M916.6,350.0 L918.5,404.5 L914.5,455.5 L917.8,495.8 L913.3,541.1 L917.9,582.3 L914.2,615.6 L916.7,651.2 L912.5,705.7 L909.5,736.1 L909.8,772.6 L907.7,803.2 L913.4,834.8 L908.6,885.3 L903.9,944.0"/>
<path d="M937.9,350.0 L937.2,400.7 L938.8,432.5 L935.3,461.3 L929.7,499.9 L933.2,538.8 L933.2,588.1 L932.8,635.2 L934.0,665.2 L936.9,704.4 L936.1,761.1 L939.1,806.2 L935.8,846.0 L940.4,896.2 L942.8,948.3"/>
<path d="M951.4,350.0 L949.2,390.9 L944.3,437.9 L947.7,477.6 L949.3,527.5 L948.4,561.3 L949.8,602.2 L951.9,641.5 L948.1,699.1 L951.5,747.0 L951.3,785.6 L945.8,844.7 L941.7,888.7 L947.0,941.1"/>
<path d="M965.7,350.0 L968.4,393.9 L970.0,436.9 L970.3,490.9 L975.7,530.2 L977.9,562.6 L981.0,601.3 L986.8,630.6 L981.5,668.1 L980.3,702.7 L979.3,728.1 L981.7,767.8 L978.9,805.2 L981.8,838.0 L982.1,895.9 L985.7,928.6 L982.3,967.3"/>
<path d="M983.1,350.0 L982.7,397.2 L979.4,441.9 L977.7,500.6 L981.5,548.0 L981.1,601.5 L981.7,636.8 L985.7,666.2 L989.9,703.6 L988.4,738.0 L987.5,771.9 L981.6,803.4 L978.9,853.6 L976.6,887.2 L975.7,929.0"/>
<path d="M993.6,350.0 L997.9,407.5 L1001.8,434.5 L1005.2,491.2 L1009.2,521.1 L1003.4,568.3 L1008.8,593.7 L1005.8,641.6 L1001.5,670.2 L1004.8,703.4 L1000.7,740.5 L1004.2,797.1 L1008.9,828.0 L1012.2,874.3 L1017.0,922.7"/>
<path d="M1007.0,350.0 L1007.3,399.2 L1006.6,450.2 L1007.3,506.1 L1004.1,540.4 L1004.0,570.2 L1003.6,597.3 L1003.5,627.3 L1004.0,669.8 L998.0,725.0 L997.7,779.4 L999.6,824.1 L998.1,878.5 L1003.7,918.2 L1005.3,945.8"/>
<path d="M1026.1,350.0 L1031.3,398.9 L1037.1,435.5 L1036.9,478.3 L1031.3,534.7 L1032.8,584.9 L1037.1,621.7 L1036.8,659.5 L1040.1,702.9 L1039.3,735.3 L1039.9,775.1 L1037.4,829.0 L1036.3,883.0 L1033.6,925.6 L1039.3,968.4"/>
<path d="M1038.3,350.0 L1035.9,386.1 L1037.5,431.6 L1032.0,484.1 L1036.6,534.4 L1031.2,578.5 L1025.3,614.0 L1030.4,645.6 L1032.2,691.9 L1037.2,744.5 L1038.6,790.9 L1040.9,837.9 L1043.1,883.8 L1045.1,916.2 L1048.3,957.2"/>
<path d="M1050.4,350.0 L1055.3,402.1 L1053.8,450.1 L1057.2,503.9 L1054.3,548.5 L1053.4,584.1 L1052.5,620.2 L1057.7,667.7 L1058.5,694.6 L1054.0,721.0 L1054.9,774.4 L1054.2,831.5 L1052.9,857.0 L1058.1,902.7 L1057.8,962.0"/>
<path d="M1071.4,350.0 L1067.3,382.4 L1061.3,408.0 L1056.8,456.9 L1051.8,515.7 L1047.4,571.2 L1050.0,596.8 L1052.8,630.3 L1047.4,661.8 L1050.0,713.9 L1052.7,768.9 L1054.3,796.8 L1053.8,846.6 L1050.9,904.3 L1053.5,963.0"/>
<path d="M1086.5,350.0 L1081.5,403.6 L1084.2,439.5 L1088.5,470.3 L1083.3,512.3 L1084.2,550.2 L1086.3,590.5 L1089.9,620.6 L1091.6,658.3 L1090.6,705.4 L1094.0,743.9 L1097.5,801.9 L1095.0,846.8 L1100.7,873.9 L1104.6,923.5 L1105.9,960.1"/>
<path d="M1101.0,350.0 L1100.2,385.8 L1098.7,441.9 L1099.9,490.9 L1103.6,547.2 L1097.6,582.1 L1096.7,616.3 L1100.5,661.9 L1095.0,717.9 L1098.7,772.1 L1099.6,827.4 L1103.8,862.0 L1106.0,915.3"/>
<path d="M1110.9,350.0 L1114.4,394.4 L1117.4,426.4 L1114.2,484.0 L1116.4,530.2 L1112.8,571.5 L1115.9,605.4 L1115.4,658.2 L1119.0,686.2 L1115.8,738.3 L1120.6,783.5 L1120.9,839.5 L1121.9,881.2 L1118.2,912.8 L1120.7,944.1"/>
<path d="M1129.0,350.0 L1124.8,393.1 L1130.8,419.7 L1126.1,457.8 L1129.5,504.9 L1130.7,535.4 L1130.9,572.4 L1125.3,598.2 L1129.7,657.8 L1130.5,699.8 L1133.9,734.0 L1139.2,773.9 L1143.0,825.8 L1140.1,884.5 L1136.5,910.8 L1131.5,942.1 L1132.2,968.9"/>
<path d="M1149.5,350.0 L1144.2,406.8 L1143.0,452.8 L1148.5,482.0 L1149.3,516.0 L1154.8,563.4 L1153.5,611.8 L1149.4,652.5 L1155.3,711.3 L1149.8,744.1 L1148.0,778.1 L1152.9,834.6 L1147.4,888.9 L1149.9,941.5"/>
<path d="M1155.6,350.0 L1158.6,380.1 L1160.7,437.9 L1161.8,473.4 L1157.1,524.9 L1154.2,561.3 L1154.0,590.6 L1150.8,621.5 L1153.0,651.5 L1155.6,677.0 L1150.0,708.8 L1146.6,766.3 L1151.0,824.0 L1146.7,880.1 L1141.9,920.7"/>
<path d="M1176.3,350.0 L1174.4,390.8 L1174.1,444.6 L1169.8,491.6 L1164.5,524.4 L1165.1,574.4 L1169.6,604.4 L1168.5,638.8 L1165.8,669.2 L1163.8,723.6 L1163.7,754.5 L1168.5,790.6 L1174.3,819.6 L1179.0,846.6 L1175.5,895.0 L1173.0,936.7"/>
<path d="M1188.6,350.0 L1194.6,409.7 L1189.8,467.1 L1194.5,502.2 L1197.3,529.2 L1203.0,564.5 L1206.7,590.0 L1202.4,627.0 L1206.4,652.0 L1202.6,695.5 L1207.5,735.7 L1208.4,768.3 L1204.6,798.2 L1207.1,850.1 L1202.0,882.0 L1203.3,910.1 L1200.6,952.4"/>
<path d="M1207.1,350.0 L1208.1,403.4 L1202.9,435.5 L1201.8,486.1 L1196.4,536.4 L1194.4,589.8 L1198.8,644.2 L1193.0,686.5 L1192.7,743.3 L1189.9,798.9 L1193.9,830.4 L1189.9,868.2 L1191.0,906.2 L1191.2,931.4"/>
<path d="M1216.2,350.0 L1220.0,400.0 L1217.9,455.3 L1216.4,505.2 L1211.2,556.5 L1216.6,612.0 L1216.8,654.4 L1217.2,697.9 L1222.8,723.6 L1219.0,756.5 L1216.0,785.1 L1210.4,838.7 L1212.8,867.0 L1207.0,898.9 L1207.9,944.9"/>
<path d="M1231.0,350.0 L1233.6,405.4 L1229.1,432.0 L1229.1,474.3 L1224.6,509.1 L1220.2,548.3 L1224.6,594.0 L1225.4,624.1 L1221.4,675.3 L1226.7,729.2 L1225.7,767.8 L1226.0,822.2 L1231.3,861.0 L1229.4,913.2 L1227.4,946.6"/>
</g>
<path d="M960.0,395.0 C964.2,388.3 988.3,390.3 1000.0,392.0 C1011.7,393.7 1024.2,398.3 1030.0,405.0 C1035.8,411.7 1038.3,426.2 1035.0,432.0 C1031.7,437.8 1020.0,440.0 1010.0,440.0 C1000.0,440.0 983.3,439.5 975.0,432.0 C966.7,424.5 955.8,401.7 960.0,395.0Z" fill="#c2e3cb"/>
<path d="M885.0,485.0 C890.0,477.0 908.3,476.2 915.0,482.0 C921.7,487.8 926.7,509.5 925.0,520.0 C923.3,530.5 911.7,543.3 905.0,545.0 C898.3,546.7 888.3,540.0 885.0,530.0 C881.7,520.0 880.0,493.0 885.0,485.0Z" fill="#c2e3cb"/>
<path d="M1000.0,492.0 C1004.2,483.7 1024.2,487.0 1030.0,495.0 C1035.8,503.0 1039.2,531.7 1035.0,540.0 C1030.8,548.3 1010.8,553.0 1005.0,545.0 C999.2,537.0 995.8,500.3 1000.0,492.0Z" fill="#c2e3cb"/>
<path d="M872.0,600.0 C875.8,594.7 887.8,593.8 895.0,598.0 C902.2,602.2 912.2,616.3 915.0,625.0 C917.8,633.7 916.2,645.0 912.0,650.0 C907.8,655.0 896.7,658.3 890.0,655.0 C883.3,651.7 875.0,639.2 872.0,630.0 C869.0,620.8 868.2,605.3 872.0,600.0Z" fill="#c2e3cb"/>
<path d="M1118.0,560.0 C1121.0,552.2 1135.5,556.7 1140.0,565.0 C1144.5,573.3 1148.0,602.2 1145.0,610.0 C1142.0,617.8 1126.5,620.3 1122.0,612.0 C1117.5,603.7 1115.0,567.8 1118.0,560.0Z" fill="#c2e3cb"/>
<path d="M1100.0,630.0 C1104.5,620.8 1128.3,630.0 1135.0,640.0 C1141.7,650.0 1144.5,680.8 1140.0,690.0 C1135.5,699.2 1114.7,705.0 1108.0,695.0 C1101.3,685.0 1095.5,639.2 1100.0,630.0Z" fill="#c2e3cb"/>
<path d="M990.0,748.0 C995.0,743.3 1018.3,747.5 1025.0,752.0 C1031.7,756.5 1035.0,770.3 1030.0,775.0 C1025.0,779.7 1001.7,784.5 995.0,780.0 C988.3,775.5 985.0,752.7 990.0,748.0Z" fill="#c2e3cb"/>
<path d="M1110.0,440.0 C1114.2,434.2 1134.2,443.3 1140.0,450.0 C1145.8,456.7 1149.2,474.2 1145.0,480.0 C1140.8,485.8 1120.8,491.7 1115.0,485.0 C1109.2,478.3 1105.8,445.8 1110.0,440.0Z" fill="#c2e3cb"/>
<path d="M1050.0,410.0 C1055.0,403.3 1082.0,400.0 1090.0,405.0 C1098.0,410.0 1103.0,433.3 1098.0,440.0 C1093.0,446.7 1068.0,450.0 1060.0,445.0 C1052.0,440.0 1045.0,416.7 1050.0,410.0Z" fill="#c2e3cb"/>
<path d="M1005.0,390.0 C1008.7,385.5 1024.2,384.7 1030.0,388.0 C1035.8,391.3 1040.8,403.8 1040.0,410.0 C1039.2,416.2 1030.3,424.2 1025.0,425.0 C1019.7,425.8 1011.3,420.8 1008.0,415.0 C1004.7,409.2 1001.3,394.5 1005.0,390.0Z" fill="#f8f9fa"/>
<path d="M1000.0,430.0 C1003.3,426.7 1024.2,425.5 1030.0,428.0 C1035.8,430.5 1038.3,441.7 1035.0,445.0 C1031.7,448.3 1015.8,450.5 1010.0,448.0 C1004.2,445.5 996.7,433.3 1000.0,430.0Z" fill="#f8f9fa"/>
<path d="M741.4,370.0 C744.5,367.9 756.3,367.0 759.8,364.3 C763.2,361.6 758.6,356.2 762.1,353.9 C765.6,351.6 774.9,350.9 780.5,350.5 C786.1,350.1 793.2,349.3 795.5,351.6 C797.8,353.9 796.4,361.2 794.3,364.3 C792.2,367.4 784.7,366.2 782.8,370.0 C780.9,373.8 785.9,384.4 782.8,387.3 C779.7,390.2 770.1,387.9 764.4,387.3 C758.6,386.7 752.1,385.5 748.3,383.8 C744.5,382.1 742.5,379.2 741.4,376.9 C740.2,374.6 738.3,372.1 741.4,370.0Z" fill="#a8d8b4"/>
<path d="M743.7,351.6 C746.6,349.7 756.7,347.8 759.8,349.3 C762.9,350.8 764.0,358.3 762.1,360.8 C760.2,363.3 751.5,364.3 748.3,364.3 C745.0,364.3 743.4,362.9 742.6,360.8 C741.8,358.7 740.8,353.5 743.7,351.6Z" fill="#a8d8b4"/>
<path d="M719.6,374.6 C721.5,373.5 729.0,375.0 729.9,376.9 C730.8,378.8 727.2,385.0 725.3,386.1 C723.4,387.2 719.3,385.7 718.4,383.8 C717.5,381.9 717.7,375.8 719.6,374.6Z" fill="#a8d8b4"/>
<path d="M719.6,402.2 C721.5,400.1 731.8,399.5 734.5,401.0 C737.2,402.5 737.6,409.3 735.7,411.4 C733.8,413.5 725.7,415.2 723.0,413.7 C720.3,412.2 717.7,404.3 719.6,402.2Z" fill="#a8d8b4"/>
<path d="M740.3,393.0 C740.7,392.0 747.3,392.0 748.3,393.0 C749.2,394.0 747.3,398.8 746.0,398.8 C744.7,398.8 739.9,394.0 740.3,393.0Z" fill="#a8d8b4"/>
<path d="M818.5,386.1 C820.4,384.6 831.1,386.7 833.4,388.4 C835.7,390.1 834.2,395.0 832.3,396.5 C830.4,398.0 824.2,399.3 821.9,397.6 C819.6,395.9 816.6,387.6 818.5,386.1Z" fill="#a8d8b4"/>
<path d="M800.0,429.8 C802.3,426.2 810.2,429.6 815.0,432.1 C819.8,434.6 823.0,441.7 828.8,444.8 C834.5,447.9 846.0,447.6 849.5,450.5 C853.0,453.4 851.4,459.9 849.5,462.0 C847.6,464.1 842.8,464.0 838.0,463.2 C833.2,462.4 823.7,454.7 820.8,457.4 C817.9,460.1 822.7,474.7 820.8,479.3 C818.9,483.9 814.1,485.0 809.3,485.0 C804.5,485.0 795.6,483.1 792.0,479.3 C788.4,475.5 785.9,466.2 787.4,462.0 C788.9,457.8 799.1,459.4 801.2,454.0 C803.3,448.6 797.7,433.4 800.0,429.8Z" fill="#a8d8b4"/>
<path d="M826.5,481.6 C828.4,480.1 836.5,478.2 840.3,479.3 C844.1,480.4 849.9,486.0 849.5,488.5 C849.1,491.0 841.5,494.2 838.0,494.2 C834.5,494.2 830.7,490.6 828.8,488.5 C826.9,486.4 824.6,483.1 826.5,481.6Z" fill="#a8d8b4"/>
<path d="M801.0,367.0 C801.2,364.3 804.5,363.8 806.0,366.0 C807.5,368.2 810.2,377.3 810.0,380.0 C809.8,382.7 806.5,384.2 805.0,382.0 C803.5,379.8 800.8,369.7 801.0,367.0Z" fill="#a8d8b4"/>
<path d="M814.0,374.0 C814.5,371.8 817.8,371.2 819.0,373.0 C820.2,374.8 821.5,382.8 821.0,385.0 C820.5,387.2 817.2,387.8 816.0,386.0 C814.8,384.2 813.5,376.2 814.0,374.0Z" fill="#a8d8b4"/>
<path d="M620.0,627.0 C623.0,618.0 635.3,624.8 640.0,627.0 C644.7,629.2 647.0,631.0 648.0,640.0 C649.0,649.0 650.3,674.2 646.0,681.0 C641.7,687.8 626.3,690.0 622.0,681.0 C617.7,672.0 617.0,636.0 620.0,627.0Z" fill="#a8d8b4"/>
<path d="M1351.0,800.0 C1355.8,790.8 1371.8,793.3 1380.0,795.0 C1388.2,796.7 1394.3,801.7 1400.0,810.0 C1405.7,818.3 1414.0,832.7 1414.0,845.0 C1414.0,857.3 1405.7,879.8 1400.0,884.0 C1394.3,888.2 1388.2,875.7 1380.0,870.0 C1371.8,864.3 1355.8,861.7 1351.0,850.0 C1346.2,838.3 1346.2,809.2 1351.0,800.0Z" fill="#a8d8b4"/>
<path d="M1213.0,782.0 C1215.5,779.3 1229.3,784.3 1233.0,788.0 C1236.7,791.7 1237.5,801.3 1235.0,804.0 C1232.5,806.7 1221.7,807.7 1218.0,804.0 C1214.3,800.3 1210.5,784.7 1213.0,782.0Z" fill="#a8d8b4"/>
<path d="M1437.0,718.0 C1439.5,715.5 1449.5,715.5 1452.0,718.0 C1454.5,720.5 1454.5,730.5 1452.0,733.0 C1449.5,735.5 1439.5,735.5 1437.0,733.0 C1434.5,730.5 1434.5,720.5 1437.0,718.0Z" fill="#a8d8b4"/>
<path d="M858.0,654.0 C858.8,647.3 872.7,647.3 880.0,650.0 C887.3,652.7 898.7,662.2 902.0,670.0 C905.3,677.8 904.5,693.7 900.0,697.0 C895.5,700.3 882.0,697.2 875.0,690.0 C868.0,682.8 857.2,660.7 858.0,654.0Z" fill="#a8d8b4"/>
<path d="M905.0,660.0 C906.7,653.8 920.8,661.3 925.0,668.0 C929.2,674.7 931.7,693.8 930.0,700.0 C928.3,706.2 919.2,711.7 915.0,705.0 C910.8,698.3 903.3,666.2 905.0,660.0Z" fill="#a8d8b4"/>
<path d="M502.5,403.7 C505.4,401.4 513.4,401.4 517.1,401.7 C520.9,402.0 519.8,402.7 525.0,405.6 C530.2,408.5 543.4,415.7 548.4,419.3 C553.4,422.9 552.6,423.5 555.2,427.1 C557.8,430.7 564.1,437.9 564.0,440.8 C563.9,443.7 557.9,444.7 554.3,444.7 C550.7,444.7 545.1,442.8 542.5,440.8 C539.9,438.9 541.2,433.3 538.6,433.0 C536.0,432.7 531.1,438.9 526.9,438.9 C522.7,438.9 516.8,435.6 513.2,433.0 C509.6,430.4 507.7,426.1 505.4,423.2 C503.1,420.3 500.0,418.6 499.5,415.4 C499.0,412.1 499.6,406.0 502.5,403.7Z" fill="#8ab4f8"/>
<path d="M882.6,564.4 C886.6,562.6 902.4,562.6 906.6,564.4 C910.9,566.1 909.1,571.9 908.1,574.9 C907.1,577.9 903.9,581.1 900.6,582.4 C897.4,583.6 891.6,583.6 888.6,582.4 C885.6,581.1 883.6,577.9 882.6,574.9 C881.6,571.9 878.6,566.1 882.6,564.4Z" fill="#8ab4f8"/>
<path d="M1106.0,646.0 C1106.7,642.3 1111.3,639.3 1114.0,640.0 C1116.7,640.7 1121.0,646.0 1122.0,650.0 C1123.0,654.0 1122.0,662.0 1120.0,664.0 C1118.0,666.0 1112.3,665.0 1110.0,662.0 C1107.7,659.0 1105.3,649.7 1106.0,646.0Z" fill="#8ab4f8"/>
<path d="M1346.0,778.0 C1347.5,775.3 1353.7,774.0 1356.0,776.0 C1358.3,778.0 1360.7,786.0 1360.0,790.0 C1359.3,794.0 1354.2,799.7 1352.0,800.0 C1349.8,800.3 1348.0,795.7 1347.0,792.0 C1346.0,788.3 1344.5,780.7 1346.0,778.0Z" fill="#8ab4f8"/>
<path d="M1508.0,418.0 C1510.2,414.7 1520.8,409.5 1525.0,408.0 C1529.2,406.5 1532.7,406.3 1533.0,409.0 C1533.3,411.7 1530.5,420.8 1527.0,424.0 C1523.5,427.2 1515.2,429.0 1512.0,428.0 C1508.8,427.0 1505.8,421.3 1508.0,418.0Z" fill="#8ab4f8"/>
<g fill="none" stroke="#8ab4f8" stroke-linecap="round" stroke-linejoin="round">
<path d="M500.5,350.0 C501.1,353.6 502.9,365.4 504.4,371.4 C505.9,377.4 507.2,381.7 509.3,386.1 C511.4,390.5 515.3,394.7 517.1,397.8 C518.9,400.9 519.5,403.8 520.0,405.0" stroke-width="4"/>
<path d="M517.0,398.0 L525.0,397.8" stroke-width="3"/>
<path d="M560.0,440.0 C562.6,438.5 571.2,431.4 575.8,431.0 C580.4,430.6 583.1,436.3 587.5,437.9 C591.9,439.5 599.8,440.3 602.2,440.8" stroke-width="3.5"/>
<path d="M602.2,440.8 C603.5,439.0 607.2,432.0 610.0,430.0 C612.8,428.0 616.4,428.2 618.8,429.0 C621.2,429.8 621.7,433.2 624.6,435.0 C627.5,436.8 632.8,440.1 636.4,439.8 C640.0,439.5 642.2,435.1 646.1,433.0 C650.0,430.9 657.7,428.4 660.0,427.5" stroke-width="2"/>
<path d="M660.0,427.5 C662.5,428.8 672.2,431.2 675.0,435.0 C677.8,438.8 674.0,446.7 676.5,450.0 C679.0,453.3 686.5,452.1 690.0,454.6 C693.5,457.1 693.6,463.8 697.6,465.0 C701.6,466.2 710.8,460.7 714.0,462.0 C717.2,463.3 716.5,467.6 717.0,472.6 C717.5,477.6 716.5,487.3 717.0,492.0 C717.5,496.7 717.5,500.7 720.0,501.0 C722.5,501.3 728.0,495.7 732.0,493.7 C736.0,491.7 740.2,489.3 744.0,489.0 C747.8,488.7 752.7,490.5 754.7,492.0 C756.7,493.5 757.0,496.0 756.0,498.0 C755.0,500.0 750.7,501.7 748.7,504.0 C746.7,506.3 743.3,509.4 744.0,511.7 C744.7,514.0 748.7,516.0 753.0,517.7 C757.3,519.4 766.2,520.3 769.8,522.0 C773.3,523.7 774.6,525.5 774.3,528.0 C774.0,530.5 769.5,534.5 768.0,537.3 C766.5,540.1 764.5,543.0 765.0,544.8 C765.5,546.5 767.7,548.5 771.0,547.8 C774.3,547.0 781.2,544.0 784.8,540.3 C788.3,536.5 790.5,530.3 792.3,525.3 C794.0,520.3 793.5,514.0 795.3,510.2 C797.1,506.4 800.4,503.2 802.9,502.7 C805.4,502.2 808.4,504.9 810.4,507.2 C812.4,509.4 815.0,512.7 815.0,516.2 C815.0,519.7 813.2,524.8 810.4,528.3 C807.6,531.8 801.6,534.0 798.3,537.3 C795.0,540.5 792.3,544.3 790.8,547.8 C789.3,551.3 787.3,556.0 789.3,558.3 C791.3,560.6 797.4,560.9 802.9,561.4 C808.4,561.9 818.1,560.4 822.4,561.4 C826.6,562.4 827.9,564.9 828.4,567.4 C828.9,569.9 827.4,573.9 825.4,576.4 C823.4,578.9 819.9,580.9 816.4,582.4 C812.9,583.9 807.4,583.6 804.4,585.4 C801.4,587.2 800.3,590.5 798.3,593.0 C796.3,595.5 793.3,599.2 792.3,600.5" stroke-width="5"/>
<path d="M714.0,462.0 L721.7,450.0" stroke-width="4"/>
<path d="M825.4,576.4 C827.9,576.9 835.5,579.4 840.5,579.4 C845.5,579.4 851.8,578.1 855.5,576.4 C859.2,574.6 862.2,572.4 863.0,568.9 C863.8,565.4 861.2,559.1 860.0,555.3 C858.8,551.5 853.8,548.8 855.5,546.3 C857.2,543.8 866.8,541.8 870.5,540.3 C874.2,538.8 878.0,539.8 878.0,537.3 C878.0,534.8 870.5,529.3 870.5,525.3 C870.5,521.3 875.5,516.7 878.0,513.2 C880.5,509.7 884.3,505.7 885.6,504.2" stroke-width="5"/>
<path d="M878.0,540.3 C880.5,541.5 888.0,547.0 893.0,547.8 C898.0,548.5 905.5,545.3 908.0,544.8" stroke-width="4"/>
<path d="M848.0,545.0 C850.3,544.7 857.0,543.7 862.0,543.0 C867.0,542.3 874.3,540.2 878.0,541.0 C881.7,541.8 883.0,546.8 884.0,548.0" stroke-width="7"/>
<path d="M790.0,548.0 C789.8,549.7 786.8,555.8 789.0,558.0 C791.2,560.2 797.5,560.5 803.0,561.0 C808.5,561.5 817.8,560.0 822.0,561.0 C826.2,562.0 827.0,566.0 828.0,567.0" stroke-width="6"/>
<path d="M744.0,489.0 L741.0,482.0" stroke-width="3"/>
<path d="M732.0,494.0 L730.0,486.0" stroke-width="3"/>
<path d="M753.0,518.0 L756.0,512.0" stroke-width="3"/>
<path d="M715.0,475.0 L708.0,479.0" stroke-width="3"/>
<path d="M697.0,465.0 L694.0,472.0" stroke-width="3"/>
<path d="M795.0,510.0 L789.0,506.0" stroke-width="3"/>
<path d="M810.0,528.0 L818.0,533.0" stroke-width="3"/>
<path d="M799.0,537.0 L792.0,533.0" stroke-width="3"/>
<path d="M816.0,582.0 L820.0,592.0" stroke-width="3"/>
<path d="M885.0,504.0 L893.0,497.0" stroke-width="3"/>
<path d="M870.0,525.0 L864.0,519.0" stroke-width="3"/>
<path d="M855.0,576.0 L852.0,585.0" stroke-width="3"/>
<path d="M840.0,579.0 L838.0,588.0" stroke-width="3"/>
<path d="M908.0,545.0 L910.0,540.0" stroke-width="3"/>
<path d="M747.2,532.8 C747.7,535.3 748.7,543.5 750.2,547.8 C751.7,552.0 753.9,554.5 756.2,558.3 C758.5,562.1 762.5,566.4 763.8,570.4 C765.1,574.4 765.1,579.9 763.8,582.4 C762.5,584.9 757.5,584.9 756.2,585.4" stroke-width="2.5"/>
<path d="M900.0,582.0 C896.8,583.3 884.7,586.5 881.0,590.0 C877.3,593.5 880.5,596.7 878.0,603.0 C875.5,609.3 867.4,622.0 866.0,628.0 C864.6,634.0 864.7,639.2 869.5,638.7 C874.3,638.2 885.1,628.7 895.0,625.0 C904.9,621.3 920.5,617.4 929.0,616.6 C937.5,615.8 938.9,619.8 946.0,620.0 C953.1,620.2 965.3,614.7 971.5,618.0 C977.7,621.3 981.7,634.0 983.4,640.0 C985.1,646.0 982.0,651.7 981.7,654.0" stroke-width="2.2"/>
<path d="M1005.0,700.0 C1008.3,701.3 1018.3,707.0 1025.0,708.0 C1031.7,709.0 1039.2,705.3 1045.0,706.0 C1050.8,706.7 1057.5,711.0 1060.0,712.0" stroke-width="2"/>
<path d="M385.0,696.0 C387.5,695.0 394.2,696.0 400.0,690.0 C405.8,684.0 413.5,667.2 420.0,660.0 C426.5,652.8 427.8,649.7 439.0,647.0 C450.2,644.3 473.3,640.0 487.0,644.0 C500.7,648.0 512.5,669.8 521.0,671.0 C529.5,672.2 531.0,653.3 538.0,651.0 C545.0,648.7 557.3,652.3 563.0,657.0 C568.7,661.7 564.8,680.0 572.0,679.0 C579.2,678.0 597.0,659.7 606.0,651.0 C615.0,642.3 622.7,631.0 626.0,627.0" stroke-width="1.2"/>
<path d="M1120.0,740.0 C1125.0,743.3 1140.0,751.7 1150.0,760.0 C1160.0,768.3 1166.7,783.3 1180.0,790.0 C1193.3,796.7 1216.7,796.7 1230.0,800.0 C1243.3,803.3 1250.0,805.0 1260.0,810.0 C1270.0,815.0 1278.3,825.0 1290.0,830.0 C1301.7,835.0 1318.3,831.7 1330.0,840.0 C1341.7,848.3 1348.3,871.7 1360.0,880.0 C1371.7,888.3 1388.3,885.8 1400.0,890.0 C1411.7,894.2 1420.0,904.2 1430.0,905.0 C1440.0,905.8 1450.0,892.5 1460.0,895.0 C1470.0,897.5 1480.0,912.5 1490.0,920.0 C1500.0,927.5 1508.3,937.5 1520.0,940.0 C1531.7,942.5 1546.7,934.2 1560.0,935.0 C1573.3,935.8 1586.7,944.5 1600.0,945.0 C1613.3,945.5 1626.7,938.0 1640.0,938.0 C1653.3,938.0 1673.3,943.8 1680.0,945.0" stroke-width="1.2"/>
</g>
<g fill="none" stroke="#f4fbf6" stroke-width="1.3" stroke-linecap="round" stroke-linejoin="round" opacity="0.9">
<path d="M373.0,552.0 C377.3,544.8 389.8,518.6 398.6,508.5 C407.4,498.4 414.5,494.9 425.8,491.5 C437.1,488.1 456.4,488.0 466.6,488.0 C476.8,488.0 483.6,490.9 487.0,491.5"/>
<path d="M487.0,491.5 C487.0,489.2 487.8,482.2 487.0,478.0 C486.2,473.8 482.3,469.4 482.0,466.0 C481.7,462.6 481.3,459.8 485.0,457.5 C488.7,455.2 500.8,452.9 504.0,452.0"/>
<path d="M487.0,491.5 C489.8,494.9 498.3,506.1 504.0,512.0 C509.7,517.9 514.8,523.3 521.0,527.0 C527.2,530.7 537.7,532.8 541.0,534.0"/>
<path d="M456.4,427.0 C459.2,425.6 467.2,422.1 473.4,418.4 C479.6,414.7 485.9,408.4 493.8,405.0 C501.7,401.6 512.0,399.5 521.0,398.0 C530.0,396.5 536.7,396.0 548.0,396.0 C559.3,396.0 581.6,401.1 589.0,398.0 C596.4,394.9 594.4,383.3 592.4,377.6 C590.4,371.9 581.2,367.7 577.0,364.0 C572.8,360.3 573.5,355.5 567.0,355.5 C560.5,355.5 547.4,361.4 538.0,364.0 C528.6,366.6 515.3,369.7 510.8,370.8"/>
<path d="M589.0,449.0 C593.2,448.4 603.2,451.8 614.5,445.6 C625.8,439.4 649.9,417.3 657.0,411.6"/>
<path d="M657.0,411.6 C662.1,411.6 681.9,409.6 687.6,411.6 C693.3,413.6 686.2,422.1 691.0,423.5 C695.8,424.9 709.7,419.1 716.5,420.0 C723.3,420.9 727.0,424.9 731.8,428.6 C736.6,432.3 740.9,437.2 745.4,442.0 C749.9,446.8 752.5,452.9 759.0,457.5 C765.5,462.1 779.4,466.0 784.5,469.4 C789.6,472.8 785.4,475.7 789.6,478.0 C793.9,480.3 803.8,481.6 810.0,483.0 C816.2,484.4 821.3,485.8 827.0,486.4 C832.7,487.0 835.5,487.8 844.0,486.4 C852.5,485.0 868.1,480.3 878.0,478.0 C887.9,475.7 895.8,472.8 903.5,472.8 C911.2,472.8 920.6,477.1 924.0,478.0"/>
<path d="M857.6,347.0 C857.3,350.7 854.3,360.5 856.0,369.0 C857.7,377.5 868.0,388.9 868.0,398.0 C868.0,407.1 857.2,415.0 856.0,423.5 C854.8,432.0 857.9,440.5 861.0,449.0 C864.1,457.5 870.9,469.4 874.6,474.5 C878.3,479.6 881.6,478.8 883.0,479.6"/>
<path d="M759.0,347.0 C759.8,351.2 764.0,362.6 764.0,372.5 C764.0,382.4 764.1,396.6 759.0,406.5 C753.9,416.4 737.8,427.8 733.5,432.0"/>
<path d="M767.5,491.5 C768.9,495.8 771.8,506.9 776.0,517.0 C780.2,527.1 790.2,546.2 793.0,552.0"/>
<path d="M939.0,347.0 C940.2,354.1 942.6,375.3 946.0,389.5 C949.4,403.7 954.3,419.2 959.6,432.0 C964.9,444.8 972.1,456.1 978.0,466.0 C983.9,475.9 992.2,487.2 995.0,491.5"/>
<path d="M891.6,398.0 C895.0,399.7 905.8,407.2 912.0,408.0 C918.2,408.8 923.3,403.0 929.0,403.0 C934.7,403.0 938.3,408.0 946.0,408.0 C953.7,408.0 966.5,404.3 975.0,403.0 C983.5,401.7 993.3,400.5 997.0,400.0"/>
<path d="M997.0,398.0 C1002.7,397.4 1016.8,397.4 1031.0,394.6 C1045.2,391.8 1070.7,383.8 1082.0,381.0 C1093.3,378.2 1096.2,378.2 1099.0,377.6"/>
<path d="M997.0,449.0 C1005.5,447.3 1031.0,443.3 1048.0,438.8 C1065.0,434.3 1082.0,426.9 1099.0,421.8 C1116.0,416.7 1133.0,412.5 1150.0,408.0 C1167.0,403.5 1186.8,398.3 1201.0,394.6 C1215.2,390.9 1220.8,389.7 1235.0,386.0 C1249.2,382.3 1269.0,377.3 1286.0,372.5 C1303.0,367.7 1328.5,359.6 1337.0,357.0"/>
<path d="M1157.0,369.0 C1157.5,376.7 1160.7,402.8 1160.0,415.0 C1159.3,427.2 1154.7,430.7 1153.0,442.0 C1151.3,453.3 1149.7,471.9 1150.0,483.0 C1150.3,494.1 1153.3,500.0 1155.0,508.5 C1156.7,517.0 1158.8,526.8 1160.0,534.0 C1161.2,541.2 1161.7,549.0 1162.0,552.0"/>
<path d="M1184.0,369.0 C1184.8,373.8 1186.5,387.5 1189.0,398.0 C1191.5,408.5 1196.7,417.8 1199.0,432.0 C1201.3,446.2 1202.9,468.8 1202.7,483.0 C1202.5,497.2 1197.4,505.5 1197.6,517.0 C1197.8,528.5 1202.9,546.2 1204.0,552.0"/>
<path d="M1209.5,369.0 C1211.4,373.8 1217.3,384.7 1221.0,398.0 C1224.7,411.3 1230.4,432.0 1231.6,449.0 C1232.8,466.0 1230.3,485.8 1228.0,500.0 C1225.7,514.2 1219.7,528.3 1218.0,534.0"/>
<path d="M1265.6,369.0 C1266.2,373.8 1267.0,387.5 1269.0,398.0 C1271.0,408.5 1274.7,420.7 1277.5,432.0 C1280.3,443.3 1281.8,454.7 1286.0,466.0 C1290.2,477.3 1296.8,491.5 1303.0,500.0 C1309.2,508.5 1319.7,514.2 1323.0,517.0"/>
<path d="M1167.0,474.5 C1175.5,477.3 1201.0,485.8 1218.0,491.5 C1235.0,497.2 1252.0,507.1 1269.0,508.5 C1286.0,509.9 1311.5,501.4 1320.0,500.0"/>
<path d="M1175.5,508.5 C1182.6,509.9 1205.2,515.6 1218.0,517.0 C1230.8,518.4 1246.3,517.0 1252.0,517.0"/>
<path d="M1354.0,347.0 C1352.3,352.7 1345.4,368.2 1344.0,381.0 C1342.6,393.8 1343.1,412.5 1345.6,424.0 C1348.1,435.5 1354.8,444.2 1359.0,450.0 C1363.2,455.8 1366.1,455.1 1371.0,458.5 C1375.9,461.9 1382.1,464.8 1388.4,470.5 C1394.7,476.2 1402.7,487.7 1409.0,492.8 C1415.3,497.9 1420.8,498.5 1426.0,501.0 C1431.2,503.5 1434.8,505.4 1440.0,508.0 C1445.2,510.6 1451.3,512.8 1457.0,516.8 C1462.7,520.8 1465.4,527.1 1474.0,532.0 C1482.6,536.9 1501.3,542.7 1508.5,546.0 C1515.7,549.3 1515.6,551.0 1517.0,552.0"/>
<path d="M1423.0,347.0 C1421.0,354.2 1412.2,380.0 1411.0,390.0 C1409.8,400.0 1412.7,399.9 1416.0,407.0 C1419.3,414.1 1429.3,424.2 1431.0,432.8 C1432.7,441.4 1429.1,448.5 1426.0,458.5 C1422.9,468.5 1413.7,482.8 1412.5,492.8 C1411.3,502.8 1417.9,514.2 1419.0,518.5"/>
<path d="M1337.0,487.6 C1339.8,488.8 1348.3,483.8 1354.0,494.5 C1359.7,505.2 1368.2,542.4 1371.0,552.0"/>
<path d="M1574.0,347.0 C1576.0,356.4 1580.9,389.9 1586.0,403.6 C1591.1,417.3 1597.4,425.6 1604.5,429.0 C1611.6,432.4 1624.5,424.8 1628.5,424.0"/>
<path d="M1642.0,441.0 C1645.5,443.0 1656.7,448.7 1663.0,453.0 C1669.3,457.3 1677.2,464.7 1680.0,467.0"/>
<path d="M317.0,589.4 C322.1,588.3 337.7,584.3 347.6,582.6 C357.5,580.9 363.2,580.1 376.5,579.0 C389.8,577.9 417.0,574.6 427.5,575.8 C438.0,577.0 436.6,581.5 439.4,586.0 C442.2,590.5 440.0,599.3 444.5,603.0 C449.0,606.7 460.7,607.7 466.6,608.0 C472.5,608.3 475.2,602.7 480.0,604.7 C484.8,606.7 491.5,613.0 495.5,620.0 C499.5,627.0 499.8,641.9 504.0,647.0 C508.2,652.1 518.2,650.0 521.0,650.6"/>
<path d="M317.0,672.7 C324.1,670.2 348.2,661.4 359.5,657.4 C370.8,653.4 376.5,649.0 385.0,649.0 C393.5,649.0 406.0,650.9 410.5,657.4 C415.0,663.9 412.6,677.2 412.0,688.0 C411.4,698.8 405.8,710.5 407.0,722.0 C408.2,733.5 417.0,751.2 419.0,757.0"/>
<path d="M347.6,582.6 C348.2,580.3 347.0,574.1 351.0,569.0 C355.0,563.9 368.0,554.8 371.4,552.0"/>
<path d="M412.0,657.4 C414.8,654.0 420.8,643.8 429.0,637.0 C437.2,630.2 455.2,621.4 461.5,616.6 C467.8,611.8 465.8,609.4 466.6,608.0"/>
<path d="M543.0,681.0 C546.4,681.8 555.3,687.2 563.5,686.0 C571.7,684.8 582.5,674.8 592.4,674.0 C602.3,673.2 612.2,680.1 623.0,681.0 C633.8,681.9 651.3,679.8 657.0,679.5"/>
<path d="M623.0,681.0 C622.7,685.0 619.9,695.3 621.3,705.0 C622.7,714.7 628.4,730.3 631.5,739.0 C634.6,747.7 638.6,754.0 640.0,757.0"/>
<path d="M560.0,552.0 C564.8,554.8 578.5,564.8 589.0,569.0 C599.5,573.2 615.9,571.8 623.0,577.5 C630.1,583.2 625.8,597.9 631.5,603.0 C637.2,608.1 652.8,607.2 657.0,608.0"/>
<path d="M317.0,744.0 C319.8,744.3 325.5,745.5 334.0,745.8 C342.5,746.1 362.3,745.8 368.0,745.8"/>
<path d="M657.0,599.6 C665.5,603.8 695.2,618.5 708.0,625.0 C720.8,631.5 726.4,633.9 733.5,638.7 C740.6,643.5 744.8,648.3 750.5,654.0 C756.2,659.7 759.0,670.2 767.5,672.7 C776.0,675.2 791.6,672.4 801.5,669.3 C811.4,666.2 819.9,657.1 827.0,654.0 C834.1,650.9 841.2,651.2 844.0,650.6"/>
<path d="M657.0,686.0 C662.1,686.3 681.9,686.0 687.6,688.0 C693.3,690.0 686.2,696.0 691.0,698.0 C695.8,700.0 708.0,700.2 716.5,700.0 C725.0,699.8 732.1,695.7 742.0,696.5 C751.9,697.3 764.7,702.5 776.0,705.0 C787.3,707.5 798.7,708.7 810.0,711.8 C821.3,714.9 836.9,721.4 844.0,723.7 C851.1,726.0 851.1,725.1 852.5,725.4"/>
<path d="M767.5,672.7 C766.9,675.2 762.9,682.6 764.0,688.0 C765.1,693.4 773.7,699.3 774.0,705.0 C774.3,710.7 769.5,713.3 765.8,722.0 C762.1,730.7 754.3,751.2 752.0,757.0"/>
<path d="M801.5,669.3 C800.6,675.2 797.8,694.8 796.4,705.0 C795.0,715.2 791.3,721.8 793.0,730.5 C794.7,739.2 804.3,752.6 806.6,757.0"/>
<path d="M827.0,654.0 C824.2,651.2 812.3,643.2 810.0,637.0 C807.7,630.8 810.6,621.4 813.4,616.6 C816.2,611.8 824.7,609.4 827.0,608.0"/>
<path d="M735.0,552.0 C735.3,559.1 733.0,586.0 737.0,594.5 C741.0,603.0 752.5,599.3 759.0,603.0 C765.5,606.7 773.2,614.3 776.0,616.6"/>
<path d="M317.0,814.8 C322.7,816.2 339.7,821.0 351.0,823.3 C362.3,825.6 370.8,827.0 385.0,828.4 C399.2,829.8 423.8,831.8 436.0,831.8 C448.2,831.8 450.9,828.7 458.0,828.4 C465.1,828.1 472.8,830.0 478.5,830.0 C484.2,830.0 487.8,827.0 492.0,828.4 C496.2,829.8 499.7,836.3 504.0,838.6 C508.3,840.9 511.9,842.0 517.6,842.0 C523.3,842.0 531.2,841.7 538.0,838.6 C544.8,835.5 549.9,825.8 558.4,823.3 C566.9,820.8 579.6,822.4 589.0,823.3 C598.4,824.1 606.0,826.1 614.5,828.4 C623.0,830.7 634.1,831.9 640.0,837.0 C645.9,842.1 647.2,853.9 650.0,859.0 C652.8,864.1 655.8,866.1 657.0,867.5"/>
<path d="M317.0,937.0 C325.5,936.8 353.8,935.5 368.0,935.5 C382.2,935.5 387.8,935.3 402.0,937.0 C416.2,938.7 440.2,944.0 453.0,945.7 C465.8,947.4 470.0,948.2 478.5,947.4 C487.0,946.5 499.8,941.7 504.0,940.6"/>
<path d="M378.0,757.0 C380.6,761.0 386.7,774.0 393.5,780.8 C400.3,787.6 411.9,792.7 419.0,797.8 C426.1,802.9 432.0,805.7 436.0,811.4 C440.0,817.1 441.7,828.4 442.8,831.8"/>
<path d="M442.8,757.0 C444.5,761.8 446.8,779.5 453.0,786.0 C459.2,792.5 474.3,792.3 480.0,796.0 C485.7,799.7 485.0,802.6 487.0,808.0 C489.0,813.4 491.2,825.0 492.0,828.4"/>
<path d="M436.0,831.8 C433.2,835.2 423.0,844.6 419.0,852.0 C415.0,859.4 412.6,866.9 412.0,876.0 C411.4,885.1 413.3,898.1 415.6,906.6 C417.9,915.1 423.8,917.8 425.8,927.0 C427.8,936.2 427.2,956.2 427.5,962.0"/>
<path d="M509.0,859.0 C516.7,863.2 545.1,877.4 555.0,884.5 C564.9,891.6 564.1,894.4 568.6,901.5 C573.1,908.6 575.8,921.1 582.0,927.0 C588.2,932.9 596.3,931.2 606.0,937.0 C615.7,942.8 634.3,957.8 640.0,962.0"/>
<path d="M463.0,899.8 C468.4,903.2 488.1,916.9 495.5,920.0 C502.9,923.1 500.3,919.3 507.4,918.5 C514.5,917.7 527.8,917.8 538.0,915.0 C548.2,912.2 563.5,903.8 568.6,901.5"/>
<path d="M648.5,757.0 C645.7,761.2 635.8,775.4 631.5,782.5 C627.2,789.6 630.1,793.0 623.0,799.5 C615.9,806.0 594.7,817.9 589.0,821.6"/>
<path d="M749.0,767.0 C749.0,776.7 750.2,811.9 749.0,825.0 C747.8,838.1 742.0,839.7 742.0,845.4 C742.0,851.1 748.4,853.9 749.0,859.0 C749.6,864.1 747.1,871.8 745.4,876.0 C743.7,880.2 739.5,878.8 738.6,884.5 C737.8,890.2 738.6,902.9 740.3,910.0 C742.0,917.1 748.1,918.3 749.0,927.0 C749.9,935.7 746.0,956.2 745.4,962.0"/>
<path d="M749.0,825.0 C751.2,824.4 757.3,823.3 762.4,821.6 C767.5,819.9 774.3,817.3 779.4,814.8 C784.5,812.2 787.9,807.7 793.0,806.3 C798.1,804.9 804.3,808.8 810.0,806.3 C815.7,803.8 817.1,797.0 827.0,791.0 C836.9,785.0 862.4,774.0 869.5,770.6"/>
<path d="M793.0,806.3 C793.0,804.3 797.2,797.5 793.0,794.4 C788.8,791.3 772.3,791.0 767.5,787.6 C762.7,784.2 764.6,776.3 764.0,774.0"/>
<path d="M798.0,820.0 C799.4,824.2 802.3,837.8 806.6,845.4 C810.9,853.0 820.5,860.1 823.6,865.8 C826.7,871.5 819.1,876.0 825.3,879.4 C831.5,882.8 850.8,883.2 861.0,886.0 C871.2,888.8 880.8,893.0 886.5,896.4 C892.2,899.8 893.6,904.9 895.0,906.6"/>
<path d="M818.5,816.5 C823.6,817.1 840.5,816.6 849.0,820.0 C857.5,823.4 856.2,834.5 869.5,837.0 C882.8,839.5 919.1,835.3 929.0,835.0"/>
<path d="M657.0,865.8 C662.7,870.3 679.7,887.3 691.0,893.0 C702.3,898.7 719.3,898.7 725.0,899.8"/>
<path d="M749.0,867.5 C754.1,868.6 772.1,872.3 779.4,874.3 C786.7,876.3 785.1,878.5 793.0,879.4 C800.9,880.2 815.7,878.3 827.0,879.4 C838.3,880.5 855.3,884.9 861.0,886.0"/>
<path d="M793.0,879.4 C792.4,881.7 791.3,887.9 789.6,893.0 C787.9,898.1 785.1,905.8 782.8,910.0 C780.5,914.2 777.1,917.1 776.0,918.5"/>
<path d="M1104.0,779.0 C1114.5,783.8 1153.7,799.5 1167.0,808.0 C1180.3,816.5 1179.8,822.7 1184.0,830.0 C1188.2,837.3 1186.8,842.9 1192.5,852.0 C1198.2,861.1 1210.9,876.2 1218.0,884.5 C1225.1,892.8 1231.0,894.4 1235.0,901.5 C1239.0,908.6 1242.8,916.9 1242.0,927.0 C1241.2,937.1 1232.0,956.2 1230.0,962.0"/>
<path d="M1068.4,799.5 C1073.5,804.3 1088.2,819.0 1099.0,828.4 C1109.8,837.8 1123.1,846.2 1133.0,855.6 C1142.9,865.0 1154.2,876.9 1158.5,884.5 C1162.8,892.1 1154.2,894.4 1158.5,901.5 C1162.8,908.6 1174.1,919.9 1184.0,927.0 C1193.9,934.1 1209.5,938.2 1218.0,944.0 C1226.5,949.8 1232.2,959.0 1235.0,962.0"/>
<path d="M1087.0,876.0 C1087.0,880.2 1080.8,891.6 1087.0,901.5 C1093.2,911.4 1118.2,925.4 1124.5,935.5 C1130.8,945.6 1124.5,957.6 1124.5,962.0"/>
<path d="M1242.0,927.0 C1243.7,918.5 1247.5,888.8 1252.0,876.0 C1256.5,863.2 1263.3,859.0 1269.0,850.5 C1274.7,842.0 1283.2,829.2 1286.0,825.0"/>
<path d="M1248.6,932.0 C1252.0,934.0 1259.9,940.6 1269.0,944.0 C1278.1,947.4 1291.7,949.5 1303.0,952.5 C1314.3,955.5 1331.3,960.4 1337.0,962.0"/>
<path d="M997.0,896.4 C1000.4,900.3 1011.7,909.1 1017.4,920.0 C1023.1,930.9 1028.7,955.0 1031.0,962.0"/>
<path d="M1262.0,781.0 C1258.9,784.3 1248.0,790.8 1243.5,801.0 C1239.0,811.2 1236.4,835.2 1235.0,842.0"/>
<path d="M1257.0,757.0 C1259.0,760.7 1264.2,771.9 1269.0,779.0 C1273.8,786.1 1282.6,791.8 1286.0,799.5 C1289.4,807.2 1288.8,820.8 1289.4,825.0"/>
<path d="M1371.0,552.0 C1373.0,558.6 1378.7,584.0 1383.0,591.4 C1387.3,598.8 1389.8,597.5 1397.0,596.6 C1404.2,595.8 1418.3,587.7 1426.0,586.3 C1433.7,584.9 1436.4,588.9 1443.0,588.0 C1449.6,587.1 1458.1,585.0 1465.6,581.0 C1473.1,577.0 1480.8,565.7 1488.0,564.0 C1495.2,562.3 1500.8,570.6 1508.5,570.9 C1516.2,571.2 1526.0,566.6 1534.0,565.7 C1542.0,564.8 1552.8,565.7 1556.5,565.7"/>
<path d="M1383.0,591.4 C1380.5,592.8 1374.0,592.3 1368.0,600.0 C1362.0,607.7 1352.5,629.8 1347.3,637.8 C1342.1,645.8 1338.7,646.3 1337.0,648.0"/>
<path d="M1560.0,565.7 C1552.8,568.6 1526.2,577.3 1517.0,583.0 C1507.8,588.7 1507.3,595.2 1505.0,600.0 C1502.7,604.8 1501.0,604.3 1503.0,612.0 C1505.0,619.7 1512.4,636.3 1517.0,646.3 C1521.6,656.3 1526.5,666.0 1530.8,672.0 C1535.1,678.0 1536.7,679.7 1543.0,682.3 C1549.3,684.9 1561.4,687.2 1568.5,687.5 C1575.6,687.8 1580.0,684.0 1585.7,684.0 C1591.4,684.0 1600.0,686.9 1602.8,687.5"/>
<path d="M1580.5,610.0 C1585.7,609.5 1605.1,605.2 1611.4,607.0 C1617.7,608.8 1614.0,618.1 1618.3,620.6 C1622.6,623.1 1633.9,622.0 1637.0,622.3"/>
<path d="M1373.0,692.6 C1369.8,697.8 1360.0,715.5 1354.0,723.5 C1348.0,731.5 1339.8,737.8 1337.0,740.6"/>
<path d="M1546.0,723.5 C1549.8,725.5 1557.6,731.2 1568.5,735.5 C1579.4,739.8 1601.4,745.4 1611.4,749.0 C1621.4,752.6 1625.7,755.7 1628.5,757.0"/>
<path d="M1620.0,740.6 C1624.3,737.8 1635.7,729.8 1645.7,723.5 C1655.7,717.2 1674.3,706.4 1680.0,703.0"/>
<path d="M1491.0,757.0 C1491.0,759.0 1489.2,765.3 1491.0,769.0 C1492.8,772.7 1499.3,774.1 1501.6,779.3 C1503.9,784.5 1505.0,792.3 1505.0,800.0 C1505.0,807.7 1501.9,819.9 1501.6,825.6 C1501.3,831.3 1505.1,828.3 1503.4,834.0 C1501.7,839.7 1495.7,852.8 1491.4,860.0 C1487.1,867.2 1485.7,872.5 1477.6,877.0 C1469.5,881.5 1448.8,885.6 1443.0,887.3"/>
<path d="M1505.0,800.0 C1511.3,800.3 1531.0,798.8 1543.0,801.6 C1555.0,804.4 1567.9,815.0 1577.0,817.0 C1586.1,819.0 1590.2,817.6 1597.7,813.6 C1605.2,809.6 1617.7,796.4 1621.7,793.0"/>
<path d="M1580.5,817.0 C1581.9,821.3 1587.8,834.1 1589.0,842.7 C1590.2,851.3 1590.8,861.4 1587.4,868.5 C1584.0,875.6 1573.1,879.9 1568.5,885.6 C1563.9,891.3 1562.0,898.6 1560.0,902.8 C1558.0,907.0 1557.1,909.6 1556.5,911.0"/>
<path d="M1477.6,877.0 C1479.9,879.0 1485.7,885.6 1491.4,889.0 C1497.1,892.4 1507.4,894.7 1512.0,897.6 C1516.6,900.5 1513.8,904.5 1519.0,906.2 C1524.2,907.9 1533.3,907.1 1543.0,908.0 C1552.7,908.9 1569.0,909.4 1577.0,911.4 C1585.0,913.4 1585.1,920.6 1590.8,920.0 C1596.5,919.4 1602.8,909.4 1611.4,908.0 C1620.0,906.6 1637.2,910.8 1642.3,911.4"/>
<path d="M1337.0,894.0 C1342.7,896.9 1359.6,909.1 1371.0,911.4 C1382.4,913.7 1394.1,911.7 1405.6,908.0 C1417.1,904.3 1434.3,892.2 1440.0,889.0"/>
<path d="M1602.8,769.0 C1600.0,772.7 1589.4,784.7 1585.7,791.3 C1582.0,797.9 1581.4,805.6 1580.5,808.5"/>
<path d="M1640.6,770.7 C1643.7,774.1 1655.7,785.0 1659.4,791.3 C1663.1,797.6 1659.6,801.4 1663.0,808.5 C1666.4,815.6 1677.2,829.8 1680.0,834.0"/>
<path d="M1422.7,921.6 C1420.4,925.6 1413.3,939.0 1409.0,945.7 C1404.7,952.4 1399.0,959.3 1397.0,962.0"/>
<path d="M1146.6,623.4 C1150.0,628.5 1162.5,648.3 1167.0,654.0 C1171.5,659.7 1165.3,655.7 1173.8,657.4 C1182.3,659.1 1207.8,660.6 1218.0,664.0 C1228.2,667.4 1232.7,673.8 1235.0,677.8 C1237.3,681.8 1231.6,684.9 1231.6,688.0 C1231.6,691.1 1239.6,695.1 1235.0,696.5 C1230.4,697.9 1209.2,696.5 1204.0,696.5"/>
<path d="M1167.0,654.0 C1168.1,658.0 1176.6,669.3 1173.8,677.8 C1171.0,686.3 1155.1,697.6 1150.0,705.0 C1144.9,712.4 1145.0,716.3 1143.0,722.0 C1141.0,727.7 1138.8,736.2 1138.0,739.0"/>
<path d="M1173.8,677.8 C1178.3,680.6 1195.9,688.8 1201.0,694.8 C1206.1,700.8 1204.4,707.5 1204.4,713.5 C1204.4,719.5 1201.6,727.7 1201.0,730.5"/>
<path d="M1177.0,654.0 C1178.2,650.6 1180.0,637.0 1184.0,633.6 C1188.0,630.2 1195.3,632.5 1201.0,633.6 C1206.7,634.7 1205.2,637.0 1218.0,640.4 C1230.8,643.8 1267.6,651.7 1277.5,654.0"/>
<path d="M1277.5,654.0 C1273.2,662.5 1259.7,690.8 1252.0,705.0 C1244.3,719.2 1237.3,730.3 1231.6,739.0 C1225.9,747.7 1220.3,754.0 1218.0,757.0"/>
<path d="M1218.0,591.0 C1216.6,594.4 1214.6,601.0 1209.5,611.5 C1204.4,622.0 1191.1,646.9 1187.4,654.0"/>
<path d="M1158.5,552.0 C1157.1,556.2 1152.8,569.0 1150.0,577.5 C1147.2,586.0 1142.9,598.8 1141.5,603.0"/>
<path d="M1184.0,552.0 C1182.8,554.8 1179.8,563.3 1177.0,569.0 C1174.2,574.7 1168.7,583.2 1167.0,586.0"/>
</g>
<g fill="none" stroke="#ffffff" stroke-width="1.8" stroke-linecap="round" stroke-linejoin="round">
<path d="M927.0,552.0 C924.5,556.8 923.0,575.6 912.0,581.0 C901.0,586.4 872.9,577.2 861.0,584.3 C849.1,591.4 840.6,612.9 840.6,623.4 C840.6,633.9 855.0,639.6 861.0,647.0 C867.0,654.4 873.8,664.2 876.3,667.6"/>
<path d="M880.0,545.0 C886.7,544.2 906.7,544.2 920.0,540.0 C933.3,535.8 953.3,523.3 960.0,520.0"/>
<path d="M1000.0,470.0 C1006.7,471.7 1026.7,479.2 1040.0,480.0 C1053.3,480.8 1073.3,475.8 1080.0,475.0"/>
<path d="M940.0,560.0 C946.7,563.3 968.3,575.0 980.0,580.0 C991.7,585.0 998.3,586.7 1010.0,590.0 C1021.7,593.3 1036.7,598.3 1050.0,600.0 C1063.3,601.7 1078.3,598.3 1090.0,600.0 C1101.7,601.7 1115.0,608.3 1120.0,610.0"/>
<path d="M1060.0,650.0 C1066.7,651.7 1086.7,655.0 1100.0,660.0 C1113.3,665.0 1133.3,676.7 1140.0,680.0"/>
<path d="M960.0,740.0 C966.7,743.3 986.7,755.0 1000.0,760.0 C1013.3,765.0 1026.7,766.7 1040.0,770.0 C1053.3,773.3 1073.3,778.3 1080.0,780.0"/>
<path d="M930.0,800.0 C935.0,798.3 950.0,793.3 960.0,790.0 C970.0,786.7 985.0,781.7 990.0,780.0"/>
<path d="M1080.0,540.0 C1083.3,546.7 1095.0,566.7 1100.0,580.0 C1105.0,593.3 1108.3,613.3 1110.0,620.0"/>
<path d="M985.0,660.0 C989.2,663.3 1000.8,673.3 1010.0,680.0 C1019.2,686.7 1035.0,696.7 1040.0,700.0"/>
<path d="M900.0,480.0 C908.3,478.3 933.3,472.5 950.0,470.0 C966.7,467.5 991.7,465.8 1000.0,465.0"/>
<path d="M1150.0,640.0 C1155.0,641.7 1166.7,646.7 1180.0,650.0 C1193.3,653.3 1221.7,658.3 1230.0,660.0"/>
<path d="M1030.0,420.0 C1035.0,421.7 1048.3,426.7 1060.0,430.0 C1071.7,433.3 1093.3,438.3 1100.0,440.0"/>
</g>
<g fill="none" stroke="#f0c956" stroke-width="4.4" stroke-linecap="round" stroke-linejoin="round">
<path d="M405.0,347.0 C410.2,356.3 427.2,389.3 436.0,403.0 C444.8,416.7 449.5,419.7 458.0,429.0 C466.5,438.3 476.5,451.3 487.0,459.0 C497.5,466.7 508.2,472.5 521.0,475.0 C533.8,477.5 551.5,473.0 564.0,474.0 C576.5,475.0 586.2,478.3 596.0,481.0 C605.8,483.7 612.8,487.3 623.0,490.0 C633.2,492.7 647.2,493.0 657.0,497.0 C666.8,501.0 674.7,509.0 682.0,514.0 C689.3,519.0 695.5,520.7 701.0,527.0 C706.5,533.3 709.0,545.5 715.0,552.0 C721.0,558.5 731.1,561.5 737.0,566.0 C742.9,570.5 746.8,573.3 750.5,579.0 C754.2,584.7 755.2,593.5 759.0,600.0 C762.8,606.5 767.3,612.7 773.0,618.0 C778.7,623.3 786.3,627.4 793.0,632.0 C799.7,636.6 805.9,643.0 813.0,645.5 C820.1,648.0 827.5,645.1 835.5,647.0 C843.5,648.9 854.2,653.3 861.0,657.0 C867.8,660.7 872.0,663.0 876.0,669.0 C880.0,675.0 881.3,686.5 885.0,693.0 C888.7,699.5 893.5,703.7 898.0,708.0 C902.5,712.3 907.5,717.8 912.0,719.0 C916.5,720.2 917.7,716.2 925.0,715.0 C932.3,713.8 944.3,709.8 956.0,712.0 C967.7,714.2 985.2,724.2 995.0,728.0 C1004.8,731.8 1005.3,734.8 1015.0,735.0 C1024.7,735.2 1041.3,727.3 1053.0,729.0 C1064.7,730.7 1077.3,740.3 1085.0,745.0 C1092.7,749.7 1086.5,753.8 1099.0,757.0 C1111.5,760.2 1145.8,760.0 1160.0,764.0 C1174.2,768.0 1174.3,774.5 1184.0,781.0 C1193.7,787.5 1208.7,797.7 1218.0,803.0 C1227.3,808.3 1233.8,809.7 1240.0,813.0 C1246.2,816.3 1248.8,821.0 1255.0,823.0 C1261.2,825.0 1263.3,824.7 1277.0,825.0 C1290.7,825.3 1325.3,824.3 1337.0,825.0 C1348.7,825.7 1339.8,825.5 1347.0,829.0 C1354.2,832.5 1369.7,839.5 1380.0,846.0 C1390.3,852.5 1400.2,862.0 1409.0,868.0 C1417.8,874.0 1425.5,876.2 1433.0,882.0 C1440.5,887.8 1447.7,895.8 1454.0,903.0 C1460.3,910.2 1465.7,917.8 1471.0,925.0 C1476.3,932.2 1481.2,939.8 1486.0,946.0 C1490.8,952.2 1497.7,959.3 1500.0,962.0"/>
<path d="M625.0,347.0 C623.8,353.5 620.3,373.5 618.0,386.0 C615.7,398.5 612.5,412.7 611.0,422.0 C609.5,431.3 611.5,432.3 609.0,442.0 C606.5,451.7 601.3,468.8 596.0,480.0 C590.7,491.2 583.0,497.2 577.0,509.0 C571.0,520.8 564.2,541.5 560.0,551.0 C555.8,560.5 556.0,558.5 552.0,566.0 C548.0,573.5 539.2,587.0 536.0,596.0 C532.8,605.0 535.8,608.7 533.0,620.0 C530.2,631.3 522.3,655.0 519.0,664.0 C515.7,673.0 513.2,670.5 513.0,674.0 C512.8,677.5 515.4,680.3 517.6,685.0 C519.8,689.7 523.4,694.5 526.0,702.0 C528.6,709.5 531.3,720.8 533.0,730.0 C534.7,739.2 536.6,749.2 536.0,757.0 C535.4,764.8 532.3,770.2 529.5,777.0 C526.7,783.8 522.4,792.0 519.0,798.0 C515.6,804.0 512.1,806.2 509.0,813.0 C505.9,819.8 500.6,831.8 500.6,839.0 C500.6,846.2 507.8,846.5 509.0,856.0 C510.2,865.5 507.2,885.7 508.0,896.0 C508.8,906.3 513.8,910.5 514.0,918.0 C514.2,925.5 509.5,933.7 509.0,941.0 C508.5,948.3 510.7,958.5 511.0,962.0"/>
<path d="M317.0,719.0 C327.5,717.8 365.3,714.0 380.0,712.0 C394.7,710.0 394.0,708.7 405.0,707.0 C416.0,705.3 434.0,705.2 446.0,702.0 C458.0,698.8 466.2,690.8 477.0,688.0 C487.8,685.2 504.3,685.5 511.0,685.0 C517.7,684.5 516.0,685.0 517.0,685.0"/>
<path d="M533.0,730.0 C533.5,732.7 532.3,743.3 536.0,746.0 C539.7,748.7 549.5,744.9 555.0,746.0 C560.5,747.1 563.3,753.4 569.0,752.6 C574.7,751.8 582.8,743.3 589.0,741.0 C595.2,738.7 599.5,737.3 606.0,739.0 C612.5,740.7 619.5,748.7 628.0,751.0 C636.5,753.3 643.7,754.1 657.0,752.6 C670.3,751.1 695.2,743.1 708.0,742.0 C720.8,740.9 720.8,744.2 733.5,746.0 C746.2,747.8 770.3,752.1 784.5,752.6 C798.7,753.1 807.8,753.3 818.5,749.0 C829.2,744.7 839.1,732.0 849.0,727.0 C858.9,722.0 867.5,720.3 878.0,719.0 C888.5,717.7 906.3,719.0 912.0,719.0"/>
<path d="M1040.0,648.0 C1046.2,645.8 1063.2,638.8 1077.0,635.0 C1090.8,631.2 1112.2,627.8 1123.0,625.0 C1133.8,622.2 1134.2,619.4 1141.5,618.0 C1148.8,616.6 1145.8,616.9 1167.0,616.6 C1188.2,616.3 1249.2,614.3 1269.0,616.0 C1288.8,617.7 1278.9,624.1 1286.0,627.0 C1293.1,629.9 1303.0,629.9 1311.5,633.6 C1320.0,637.3 1329.9,644.3 1337.0,649.0 C1344.1,653.7 1348.3,659.0 1354.0,662.0 C1359.7,665.0 1366.2,663.7 1371.0,667.0 C1375.8,670.3 1378.7,676.0 1383.0,682.0 C1387.3,688.0 1391.2,697.2 1397.0,703.0 C1402.8,708.8 1410.8,712.7 1418.0,717.0 C1425.2,721.3 1433.5,725.8 1440.0,729.0 C1446.5,732.2 1448.5,734.3 1457.0,736.0 C1465.5,737.7 1481.0,735.5 1491.0,739.0 C1501.0,742.5 1509.5,753.2 1517.0,757.0 C1524.5,760.8 1528.8,761.6 1536.0,762.0 C1543.2,762.4 1551.5,759.9 1560.0,759.6 C1568.5,759.3 1578.5,759.4 1587.0,760.4 C1595.5,761.4 1601.2,764.2 1611.0,765.6 C1620.8,767.0 1634.5,767.6 1646.0,769.0 C1657.5,770.4 1674.3,773.2 1680.0,774.0"/>
<path d="M1062.0,347.0 C1059.7,349.8 1050.7,355.5 1048.0,364.0 C1045.3,372.5 1046.3,381.0 1046.0,398.0 C1045.7,415.0 1044.5,450.3 1046.0,466.0 C1047.5,481.7 1051.8,480.7 1055.0,492.0 C1058.2,503.3 1063.0,524.0 1065.0,534.0 C1067.0,544.0 1067.5,542.7 1067.0,552.0 C1066.5,561.3 1064.0,577.8 1062.0,590.0 C1060.0,602.2 1058.7,612.5 1055.0,625.0 C1051.3,637.5 1045.0,652.5 1040.0,665.0 C1035.0,677.5 1031.7,687.5 1025.0,700.0 C1018.3,712.5 1006.7,730.5 1000.0,740.0 C993.3,749.5 989.8,749.9 985.0,757.0 C980.2,764.1 975.7,771.2 971.5,782.5 C967.3,793.8 965.0,809.4 959.6,825.0 C954.2,840.6 945.5,862.3 939.0,876.0 C932.5,889.7 925.3,897.1 920.5,907.0 C915.7,916.9 912.2,926.3 910.0,935.5 C907.8,944.7 907.5,957.6 907.0,962.0"/>
<path d="M1085.0,347.0 C1086.8,352.2 1091.3,370.7 1096.0,378.0 C1100.7,385.3 1108.5,384.8 1113.0,391.0 C1117.5,397.2 1119.7,406.7 1123.0,415.0 C1126.3,423.3 1131.3,434.0 1133.0,441.0 C1134.7,448.0 1134.2,448.5 1133.0,457.0 C1131.8,465.5 1128.3,483.3 1126.0,492.0 C1123.7,500.7 1119.5,499.0 1119.0,509.0 C1118.5,519.0 1121.2,539.2 1123.0,552.0 C1124.8,564.8 1129.6,575.2 1129.6,586.0 C1129.6,596.8 1123.6,608.5 1123.0,617.0 C1122.4,625.5 1123.5,630.8 1126.0,637.0 C1128.5,643.2 1136.8,647.8 1138.0,654.0 C1139.2,660.2 1136.7,666.9 1133.0,674.0 C1129.3,681.1 1121.2,688.5 1116.0,696.5 C1110.8,704.5 1105.2,711.9 1102.0,722.0 C1098.8,732.1 1102.0,746.9 1097.0,757.0 C1092.0,767.1 1077.0,774.6 1072.0,782.5 C1067.0,790.4 1067.3,798.7 1067.0,804.6 C1066.7,810.5 1070.9,812.3 1070.0,818.0 C1069.1,823.7 1065.6,833.2 1061.6,838.6 C1057.6,844.0 1048.6,848.5 1046.0,850.5"/>
<path d="M902.0,347.0 C904.5,350.3 914.0,358.5 917.0,367.0 C920.0,375.5 918.0,388.7 920.0,398.0 C922.0,407.3 924.7,411.7 929.0,423.0 C933.3,434.3 940.3,453.2 946.0,466.0 C951.7,478.8 958.2,490.2 963.0,500.0 C967.8,509.8 970.8,516.3 975.0,525.0 C979.2,533.7 983.0,543.7 988.0,552.0 C993.0,560.3 1001.0,567.0 1005.0,575.0 C1009.0,583.0 1010.8,595.8 1012.0,600.0"/>
<path d="M918.0,385.0 C920.8,387.5 929.7,390.8 935.0,400.0 C940.3,409.2 946.2,428.3 950.0,440.0 C953.8,451.7 955.5,460.0 958.0,470.0 C960.5,480.0 962.2,490.8 965.0,500.0 C967.8,509.2 973.3,520.8 975.0,525.0"/>
<path d="M1070.0,620.0 C1070.0,625.1 1070.8,637.9 1070.0,650.6 C1069.2,663.4 1067.8,681.8 1065.0,696.5 C1062.2,711.2 1055.5,728.9 1053.0,739.0 C1050.5,749.1 1051.4,748.3 1049.7,757.0 C1048.0,765.7 1043.8,775.7 1043.0,791.0 C1042.2,806.3 1043.8,832.0 1044.6,849.0 C1045.4,866.0 1045.2,874.2 1048.0,893.0 C1050.8,911.8 1059.3,950.5 1061.6,962.0"/>
<path d="M1010.0,560.0 C1007.5,564.3 1002.0,576.5 995.0,586.0 C988.0,595.5 975.7,605.7 968.0,617.0 C960.3,628.3 949.8,640.8 949.0,654.0 C948.2,667.2 963.5,685.2 963.0,696.5 C962.5,707.8 948.8,717.8 946.0,722.0"/>
<path d="M898.0,350.0 C906.0,352.7 929.5,362.3 946.0,366.0 C962.5,369.7 972.7,372.3 997.0,372.0 C1021.3,371.7 1069.8,365.8 1092.0,364.0 C1114.2,362.2 1121.7,360.3 1130.0,361.0 C1138.3,361.7 1130.2,366.3 1142.0,368.0 C1153.8,369.7 1185.5,372.2 1201.0,371.0 C1216.5,369.8 1212.3,365.0 1235.0,361.0 C1257.7,357.0 1320.0,349.3 1337.0,347.0"/>
<path d="M1050.0,480.0 C1056.2,478.2 1076.5,472.5 1087.0,469.0 C1097.5,465.5 1099.7,462.7 1113.0,459.0 C1126.3,455.3 1146.7,451.8 1167.0,447.0 C1187.3,442.2 1222.0,431.0 1235.0,430.0 C1248.0,429.0 1238.8,440.2 1245.0,441.0 C1251.2,441.8 1265.2,438.2 1272.0,435.0 C1278.8,431.8 1275.2,426.2 1286.0,422.0 C1296.8,417.8 1314.2,416.3 1337.0,410.0 C1359.8,403.7 1400.7,390.0 1423.0,384.0 C1445.3,378.0 1461.7,375.2 1471.0,374.0 C1480.3,372.8 1471.0,379.0 1479.0,377.0 C1487.0,375.0 1507.0,365.0 1519.0,362.0 C1531.0,359.0 1543.3,360.3 1551.0,359.0 C1558.7,357.7 1560.7,356.0 1565.0,354.0 C1569.3,352.0 1575.0,348.2 1577.0,347.0"/>
<path d="M1232.0,347.0 C1234.0,352.7 1240.2,370.2 1244.0,381.0 C1247.8,391.8 1252.5,401.8 1255.0,412.0 C1257.5,422.2 1257.0,431.5 1259.0,442.0 C1261.0,452.5 1266.5,463.8 1267.0,475.0 C1267.5,486.2 1261.2,499.2 1262.0,509.0 C1262.8,518.8 1269.5,526.8 1272.0,534.0 C1274.5,541.2 1274.7,543.3 1277.0,552.0 C1279.3,560.7 1285.1,577.0 1286.0,586.0 C1286.9,595.0 1284.0,600.3 1282.6,606.0 C1281.2,611.7 1275.8,615.4 1277.5,620.0 C1279.2,624.6 1288.8,626.5 1293.0,633.6 C1297.2,640.7 1298.5,652.0 1303.0,662.5 C1307.5,673.0 1315.8,685.2 1320.0,696.5 C1324.2,707.8 1326.8,720.4 1328.5,730.5 C1330.2,740.6 1330.2,746.9 1330.0,757.0 C1329.8,767.1 1326.4,780.2 1327.0,791.0 C1327.6,801.8 1331.9,816.3 1333.6,822.0 C1335.3,827.7 1336.4,824.5 1337.0,825.0"/>
<path d="M1300.0,828.0 C1299.1,831.5 1294.0,841.0 1294.5,849.0 C1295.0,857.0 1296.8,869.0 1303.0,876.0 C1309.2,883.0 1326.3,886.8 1332.0,891.0 C1337.7,895.2 1335.7,895.0 1337.0,901.5 C1338.3,908.0 1339.2,919.9 1340.0,930.0 C1340.8,940.1 1341.7,956.7 1342.0,962.0"/>
<path d="M1579.0,357.0 C1575.8,362.5 1563.5,378.0 1560.0,390.0 C1556.5,402.0 1555.7,414.7 1558.0,429.0 C1560.3,443.3 1571.7,464.0 1574.0,476.0 C1576.3,488.0 1574.0,491.0 1572.0,501.0 C1570.0,511.0 1564.5,527.5 1562.0,536.0 C1559.5,544.5 1557.0,547.7 1557.0,552.0 C1557.0,556.3 1559.2,554.8 1562.0,562.0 C1564.8,569.2 1570.9,585.2 1574.0,595.0 C1577.1,604.8 1576.5,611.0 1580.5,621.0 C1584.5,631.0 1593.8,642.2 1598.0,655.0 C1602.2,667.8 1603.2,684.3 1606.0,698.0 C1608.8,711.7 1613.8,727.2 1615.0,737.0 C1616.2,746.8 1613.7,752.2 1613.0,757.0 C1612.3,761.8 1609.5,761.3 1611.0,765.6 C1612.5,769.9 1619.3,770.1 1622.0,783.0 C1624.7,795.9 1625.9,825.9 1627.0,843.0 C1628.1,860.1 1626.1,872.8 1628.6,885.6 C1631.1,898.4 1637.4,907.3 1642.0,920.0 C1646.6,932.7 1653.7,955.0 1656.0,962.0"/>
<path d="M1583.0,347.0 L1579.0,357.0"/>
<path d="M950.0,962.0 C954.2,959.2 967.2,950.0 975.0,945.0 C982.8,940.0 987.7,939.2 997.0,932.0 C1006.3,924.8 1019.7,908.3 1031.0,901.5 C1042.3,894.7 1049.4,897.2 1065.0,891.0 C1080.6,884.8 1109.5,871.3 1124.5,864.0 C1139.5,856.7 1142.2,851.0 1155.0,847.0 C1167.8,843.0 1187.2,843.7 1201.0,840.0 C1214.8,836.3 1225.2,827.5 1238.0,825.0 C1250.8,822.5 1270.9,825.0 1277.5,825.0"/>
<path d="M1337.0,825.0 C1338.7,825.1 1339.8,829.8 1347.0,825.6 C1354.2,821.4 1369.1,807.8 1380.0,800.0 C1390.9,792.2 1402.5,786.2 1412.5,779.0 C1422.5,771.8 1434.9,760.7 1440.0,757.0 C1445.1,753.3 1440.2,760.5 1443.0,757.0 C1445.8,753.5 1450.3,741.0 1457.0,736.0 C1463.7,731.0 1473.5,730.0 1483.0,727.0 C1492.5,724.0 1504.0,719.2 1514.0,718.0 C1524.0,716.8 1533.9,721.3 1543.0,720.0 C1552.1,718.7 1560.5,715.7 1568.5,710.0 C1576.5,704.3 1585.9,694.8 1591.0,686.0 C1596.1,677.2 1591.3,667.3 1599.0,657.0 C1606.7,646.7 1627.0,633.5 1637.0,624.0 C1647.0,614.5 1651.8,606.5 1659.0,600.0 C1666.2,593.5 1676.5,587.5 1680.0,585.0"/>
<path d="M960.0,520.0 C965.0,518.3 977.7,512.2 990.0,510.0 C1002.3,507.8 1018.2,509.0 1034.0,507.0 C1049.8,505.0 1073.7,499.2 1085.0,498.0 C1096.3,496.8 1096.3,498.2 1102.0,500.0 C1107.7,501.8 1113.8,505.7 1119.0,509.0 C1124.2,512.3 1130.7,518.2 1133.0,520.0"/>
<path d="M1563.0,566.0 C1571.0,563.7 1598.3,557.3 1611.0,552.0 C1623.7,546.7 1627.5,539.0 1639.0,534.0 C1650.5,529.0 1673.2,524.0 1680.0,522.0"/>
<path d="M963.0,823.0 C965.8,823.8 974.3,825.4 980.0,828.0 C985.7,830.6 990.8,834.9 997.0,838.6 C1003.2,842.4 1009.2,848.5 1017.4,850.5 C1025.6,852.5 1041.2,850.5 1046.0,850.5"/>
<path d="M946.0,700.0 C948.3,693.3 955.7,674.8 960.0,660.0 C964.3,645.2 967.0,623.5 972.0,611.0 C977.0,598.5 983.7,593.5 990.0,585.0 C996.3,576.5 1006.7,564.2 1010.0,560.0"/>
<path d="M1012.0,600.0 C1012.5,606.7 1013.7,626.7 1015.0,640.0 C1016.3,653.3 1017.5,670.0 1020.0,680.0 C1022.5,690.0 1028.3,696.7 1030.0,700.0"/>
<path d="M946.0,722.0 C942.1,725.7 930.6,736.2 922.6,744.0 C914.6,751.8 899.8,761.2 898.0,769.0 C896.2,776.8 908.0,784.2 912.0,791.0 C916.0,797.8 920.3,806.8 922.0,810.0"/>
<path d="M1030.0,600.0 L1040.0,648.0"/>
<path d="M1053.0,729.0 C1058.3,727.5 1077.3,715.3 1085.0,720.0 C1092.7,724.7 1096.7,750.8 1099.0,757.0"/>
</g>
<g fill="none" stroke="#fde596" stroke-width="2.4" stroke-linecap="round" stroke-linejoin="round">
<path d="M405.0,347.0 C410.2,356.3 427.2,389.3 436.0,403.0 C444.8,416.7 449.5,419.7 458.0,429.0 C466.5,438.3 476.5,451.3 487.0,459.0 C497.5,466.7 508.2,472.5 521.0,475.0 C533.8,477.5 551.5,473.0 564.0,474.0 C576.5,475.0 586.2,478.3 596.0,481.0 C605.8,483.7 612.8,487.3 623.0,490.0 C633.2,492.7 647.2,493.0 657.0,497.0 C666.8,501.0 674.7,509.0 682.0,514.0 C689.3,519.0 695.5,520.7 701.0,527.0 C706.5,533.3 709.0,545.5 715.0,552.0 C721.0,558.5 731.1,561.5 737.0,566.0 C742.9,570.5 746.8,573.3 750.5,579.0 C754.2,584.7 755.2,593.5 759.0,600.0 C762.8,606.5 767.3,612.7 773.0,618.0 C778.7,623.3 786.3,627.4 793.0,632.0 C799.7,636.6 805.9,643.0 813.0,645.5 C820.1,648.0 827.5,645.1 835.5,647.0 C843.5,648.9 854.2,653.3 861.0,657.0 C867.8,660.7 872.0,663.0 876.0,669.0 C880.0,675.0 881.3,686.5 885.0,693.0 C888.7,699.5 893.5,703.7 898.0,708.0 C902.5,712.3 907.5,717.8 912.0,719.0 C916.5,720.2 917.7,716.2 925.0,715.0 C932.3,713.8 944.3,709.8 956.0,712.0 C967.7,714.2 985.2,724.2 995.0,728.0 C1004.8,731.8 1005.3,734.8 1015.0,735.0 C1024.7,735.2 1041.3,727.3 1053.0,729.0 C1064.7,730.7 1077.3,740.3 1085.0,745.0 C1092.7,749.7 1086.5,753.8 1099.0,757.0 C1111.5,760.2 1145.8,760.0 1160.0,764.0 C1174.2,768.0 1174.3,774.5 1184.0,781.0 C1193.7,787.5 1208.7,797.7 1218.0,803.0 C1227.3,808.3 1233.8,809.7 1240.0,813.0 C1246.2,816.3 1248.8,821.0 1255.0,823.0 C1261.2,825.0 1263.3,824.7 1277.0,825.0 C1290.7,825.3 1325.3,824.3 1337.0,825.0 C1348.7,825.7 1339.8,825.5 1347.0,829.0 C1354.2,832.5 1369.7,839.5 1380.0,846.0 C1390.3,852.5 1400.2,862.0 1409.0,868.0 C1417.8,874.0 1425.5,876.2 1433.0,882.0 C1440.5,887.8 1447.7,895.8 1454.0,903.0 C1460.3,910.2 1465.7,917.8 1471.0,925.0 C1476.3,932.2 1481.2,939.8 1486.0,946.0 C1490.8,952.2 1497.7,959.3 1500.0,962.0"/>
<path d="M625.0,347.0 C623.8,353.5 620.3,373.5 618.0,386.0 C615.7,398.5 612.5,412.7 611.0,422.0 C609.5,431.3 611.5,432.3 609.0,442.0 C606.5,451.7 601.3,468.8 596.0,480.0 C590.7,491.2 583.0,497.2 577.0,509.0 C571.0,520.8 564.2,541.5 560.0,551.0 C555.8,560.5 556.0,558.5 552.0,566.0 C548.0,573.5 539.2,587.0 536.0,596.0 C532.8,605.0 535.8,608.7 533.0,620.0 C530.2,631.3 522.3,655.0 519.0,664.0 C515.7,673.0 513.2,670.5 513.0,674.0 C512.8,677.5 515.4,680.3 517.6,685.0 C519.8,689.7 523.4,694.5 526.0,702.0 C528.6,709.5 531.3,720.8 533.0,730.0 C534.7,739.2 536.6,749.2 536.0,757.0 C535.4,764.8 532.3,770.2 529.5,777.0 C526.7,783.8 522.4,792.0 519.0,798.0 C515.6,804.0 512.1,806.2 509.0,813.0 C505.9,819.8 500.6,831.8 500.6,839.0 C500.6,846.2 507.8,846.5 509.0,856.0 C510.2,865.5 507.2,885.7 508.0,896.0 C508.8,906.3 513.8,910.5 514.0,918.0 C514.2,925.5 509.5,933.7 509.0,941.0 C508.5,948.3 510.7,958.5 511.0,962.0"/>
<path d="M317.0,719.0 C327.5,717.8 365.3,714.0 380.0,712.0 C394.7,710.0 394.0,708.7 405.0,707.0 C416.0,705.3 434.0,705.2 446.0,702.0 C458.0,698.8 466.2,690.8 477.0,688.0 C487.8,685.2 504.3,685.5 511.0,685.0 C517.7,684.5 516.0,685.0 517.0,685.0"/>
<path d="M533.0,730.0 C533.5,732.7 532.3,743.3 536.0,746.0 C539.7,748.7 549.5,744.9 555.0,746.0 C560.5,747.1 563.3,753.4 569.0,752.6 C574.7,751.8 582.8,743.3 589.0,741.0 C595.2,738.7 599.5,737.3 606.0,739.0 C612.5,740.7 619.5,748.7 628.0,751.0 C636.5,753.3 643.7,754.1 657.0,752.6 C670.3,751.1 695.2,743.1 708.0,742.0 C720.8,740.9 720.8,744.2 733.5,746.0 C746.2,747.8 770.3,752.1 784.5,752.6 C798.7,753.1 807.8,753.3 818.5,749.0 C829.2,744.7 839.1,732.0 849.0,727.0 C858.9,722.0 867.5,720.3 878.0,719.0 C888.5,717.7 906.3,719.0 912.0,719.0"/>
<path d="M1040.0,648.0 C1046.2,645.8 1063.2,638.8 1077.0,635.0 C1090.8,631.2 1112.2,627.8 1123.0,625.0 C1133.8,622.2 1134.2,619.4 1141.5,618.0 C1148.8,616.6 1145.8,616.9 1167.0,616.6 C1188.2,616.3 1249.2,614.3 1269.0,616.0 C1288.8,617.7 1278.9,624.1 1286.0,627.0 C1293.1,629.9 1303.0,629.9 1311.5,633.6 C1320.0,637.3 1329.9,644.3 1337.0,649.0 C1344.1,653.7 1348.3,659.0 1354.0,662.0 C1359.7,665.0 1366.2,663.7 1371.0,667.0 C1375.8,670.3 1378.7,676.0 1383.0,682.0 C1387.3,688.0 1391.2,697.2 1397.0,703.0 C1402.8,708.8 1410.8,712.7 1418.0,717.0 C1425.2,721.3 1433.5,725.8 1440.0,729.0 C1446.5,732.2 1448.5,734.3 1457.0,736.0 C1465.5,737.7 1481.0,735.5 1491.0,739.0 C1501.0,742.5 1509.5,753.2 1517.0,757.0 C1524.5,760.8 1528.8,761.6 1536.0,762.0 C1543.2,762.4 1551.5,759.9 1560.0,759.6 C1568.5,759.3 1578.5,759.4 1587.0,760.4 C1595.5,761.4 1601.2,764.2 1611.0,765.6 C1620.8,767.0 1634.5,767.6 1646.0,769.0 C1657.5,770.4 1674.3,773.2 1680.0,774.0"/>
<path d="M1062.0,347.0 C1059.7,349.8 1050.7,355.5 1048.0,364.0 C1045.3,372.5 1046.3,381.0 1046.0,398.0 C1045.7,415.0 1044.5,450.3 1046.0,466.0 C1047.5,481.7 1051.8,480.7 1055.0,492.0 C1058.2,503.3 1063.0,524.0 1065.0,534.0 C1067.0,544.0 1067.5,542.7 1067.0,552.0 C1066.5,561.3 1064.0,577.8 1062.0,590.0 C1060.0,602.2 1058.7,612.5 1055.0,625.0 C1051.3,637.5 1045.0,652.5 1040.0,665.0 C1035.0,677.5 1031.7,687.5 1025.0,700.0 C1018.3,712.5 1006.7,730.5 1000.0,740.0 C993.3,749.5 989.8,749.9 985.0,757.0 C980.2,764.1 975.7,771.2 971.5,782.5 C967.3,793.8 965.0,809.4 959.6,825.0 C954.2,840.6 945.5,862.3 939.0,876.0 C932.5,889.7 925.3,897.1 920.5,907.0 C915.7,916.9 912.2,926.3 910.0,935.5 C907.8,944.7 907.5,957.6 907.0,962.0"/>
<path d="M1085.0,347.0 C1086.8,352.2 1091.3,370.7 1096.0,378.0 C1100.7,385.3 1108.5,384.8 1113.0,391.0 C1117.5,397.2 1119.7,406.7 1123.0,415.0 C1126.3,423.3 1131.3,434.0 1133.0,441.0 C1134.7,448.0 1134.2,448.5 1133.0,457.0 C1131.8,465.5 1128.3,483.3 1126.0,492.0 C1123.7,500.7 1119.5,499.0 1119.0,509.0 C1118.5,519.0 1121.2,539.2 1123.0,552.0 C1124.8,564.8 1129.6,575.2 1129.6,586.0 C1129.6,596.8 1123.6,608.5 1123.0,617.0 C1122.4,625.5 1123.5,630.8 1126.0,637.0 C1128.5,643.2 1136.8,647.8 1138.0,654.0 C1139.2,660.2 1136.7,666.9 1133.0,674.0 C1129.3,681.1 1121.2,688.5 1116.0,696.5 C1110.8,704.5 1105.2,711.9 1102.0,722.0 C1098.8,732.1 1102.0,746.9 1097.0,757.0 C1092.0,767.1 1077.0,774.6 1072.0,782.5 C1067.0,790.4 1067.3,798.7 1067.0,804.6 C1066.7,810.5 1070.9,812.3 1070.0,818.0 C1069.1,823.7 1065.6,833.2 1061.6,838.6 C1057.6,844.0 1048.6,848.5 1046.0,850.5"/>
<path d="M902.0,347.0 C904.5,350.3 914.0,358.5 917.0,367.0 C920.0,375.5 918.0,388.7 920.0,398.0 C922.0,407.3 924.7,411.7 929.0,423.0 C933.3,434.3 940.3,453.2 946.0,466.0 C951.7,478.8 958.2,490.2 963.0,500.0 C967.8,509.8 970.8,516.3 975.0,525.0 C979.2,533.7 983.0,543.7 988.0,552.0 C993.0,560.3 1001.0,567.0 1005.0,575.0 C1009.0,583.0 1010.8,595.8 1012.0,600.0"/>
<path d="M918.0,385.0 C920.8,387.5 929.7,390.8 935.0,400.0 C940.3,409.2 946.2,428.3 950.0,440.0 C953.8,451.7 955.5,460.0 958.0,470.0 C960.5,480.0 962.2,490.8 965.0,500.0 C967.8,509.2 973.3,520.8 975.0,525.0"/>
<path d="M1070.0,620.0 C1070.0,625.1 1070.8,637.9 1070.0,650.6 C1069.2,663.4 1067.8,681.8 1065.0,696.5 C1062.2,711.2 1055.5,728.9 1053.0,739.0 C1050.5,749.1 1051.4,748.3 1049.7,757.0 C1048.0,765.7 1043.8,775.7 1043.0,791.0 C1042.2,806.3 1043.8,832.0 1044.6,849.0 C1045.4,866.0 1045.2,874.2 1048.0,893.0 C1050.8,911.8 1059.3,950.5 1061.6,962.0"/>
<path d="M1010.0,560.0 C1007.5,564.3 1002.0,576.5 995.0,586.0 C988.0,595.5 975.7,605.7 968.0,617.0 C960.3,628.3 949.8,640.8 949.0,654.0 C948.2,667.2 963.5,685.2 963.0,696.5 C962.5,707.8 948.8,717.8 946.0,722.0"/>
<path d="M898.0,350.0 C906.0,352.7 929.5,362.3 946.0,366.0 C962.5,369.7 972.7,372.3 997.0,372.0 C1021.3,371.7 1069.8,365.8 1092.0,364.0 C1114.2,362.2 1121.7,360.3 1130.0,361.0 C1138.3,361.7 1130.2,366.3 1142.0,368.0 C1153.8,369.7 1185.5,372.2 1201.0,371.0 C1216.5,369.8 1212.3,365.0 1235.0,361.0 C1257.7,357.0 1320.0,349.3 1337.0,347.0"/>
<path d="M1050.0,480.0 C1056.2,478.2 1076.5,472.5 1087.0,469.0 C1097.5,465.5 1099.7,462.7 1113.0,459.0 C1126.3,455.3 1146.7,451.8 1167.0,447.0 C1187.3,442.2 1222.0,431.0 1235.0,430.0 C1248.0,429.0 1238.8,440.2 1245.0,441.0 C1251.2,441.8 1265.2,438.2 1272.0,435.0 C1278.8,431.8 1275.2,426.2 1286.0,422.0 C1296.8,417.8 1314.2,416.3 1337.0,410.0 C1359.8,403.7 1400.7,390.0 1423.0,384.0 C1445.3,378.0 1461.7,375.2 1471.0,374.0 C1480.3,372.8 1471.0,379.0 1479.0,377.0 C1487.0,375.0 1507.0,365.0 1519.0,362.0 C1531.0,359.0 1543.3,360.3 1551.0,359.0 C1558.7,357.7 1560.7,356.0 1565.0,354.0 C1569.3,352.0 1575.0,348.2 1577.0,347.0"/>
<path d="M1232.0,347.0 C1234.0,352.7 1240.2,370.2 1244.0,381.0 C1247.8,391.8 1252.5,401.8 1255.0,412.0 C1257.5,422.2 1257.0,431.5 1259.0,442.0 C1261.0,452.5 1266.5,463.8 1267.0,475.0 C1267.5,486.2 1261.2,499.2 1262.0,509.0 C1262.8,518.8 1269.5,526.8 1272.0,534.0 C1274.5,541.2 1274.7,543.3 1277.0,552.0 C1279.3,560.7 1285.1,577.0 1286.0,586.0 C1286.9,595.0 1284.0,600.3 1282.6,606.0 C1281.2,611.7 1275.8,615.4 1277.5,620.0 C1279.2,624.6 1288.8,626.5 1293.0,633.6 C1297.2,640.7 1298.5,652.0 1303.0,662.5 C1307.5,673.0 1315.8,685.2 1320.0,696.5 C1324.2,707.8 1326.8,720.4 1328.5,730.5 C1330.2,740.6 1330.2,746.9 1330.0,757.0 C1329.8,767.1 1326.4,780.2 1327.0,791.0 C1327.6,801.8 1331.9,816.3 1333.6,822.0 C1335.3,827.7 1336.4,824.5 1337.0,825.0"/>
<path d="M1300.0,828.0 C1299.1,831.5 1294.0,841.0 1294.5,849.0 C1295.0,857.0 1296.8,869.0 1303.0,876.0 C1309.2,883.0 1326.3,886.8 1332.0,891.0 C1337.7,895.2 1335.7,895.0 1337.0,901.5 C1338.3,908.0 1339.2,919.9 1340.0,930.0 C1340.8,940.1 1341.7,956.7 1342.0,962.0"/>
<path d="M1579.0,357.0 C1575.8,362.5 1563.5,378.0 1560.0,390.0 C1556.5,402.0 1555.7,414.7 1558.0,429.0 C1560.3,443.3 1571.7,464.0 1574.0,476.0 C1576.3,488.0 1574.0,491.0 1572.0,501.0 C1570.0,511.0 1564.5,527.5 1562.0,536.0 C1559.5,544.5 1557.0,547.7 1557.0,552.0 C1557.0,556.3 1559.2,554.8 1562.0,562.0 C1564.8,569.2 1570.9,585.2 1574.0,595.0 C1577.1,604.8 1576.5,611.0 1580.5,621.0 C1584.5,631.0 1593.8,642.2 1598.0,655.0 C1602.2,667.8 1603.2,684.3 1606.0,698.0 C1608.8,711.7 1613.8,727.2 1615.0,737.0 C1616.2,746.8 1613.7,752.2 1613.0,757.0 C1612.3,761.8 1609.5,761.3 1611.0,765.6 C1612.5,769.9 1619.3,770.1 1622.0,783.0 C1624.7,795.9 1625.9,825.9 1627.0,843.0 C1628.1,860.1 1626.1,872.8 1628.6,885.6 C1631.1,898.4 1637.4,907.3 1642.0,920.0 C1646.6,932.7 1653.7,955.0 1656.0,962.0"/>
<path d="M1583.0,347.0 L1579.0,357.0"/>
<path d="M950.0,962.0 C954.2,959.2 967.2,950.0 975.0,945.0 C982.8,940.0 987.7,939.2 997.0,932.0 C1006.3,924.8 1019.7,908.3 1031.0,901.5 C1042.3,894.7 1049.4,897.2 1065.0,891.0 C1080.6,884.8 1109.5,871.3 1124.5,864.0 C1139.5,856.7 1142.2,851.0 1155.0,847.0 C1167.8,843.0 1187.2,843.7 1201.0,840.0 C1214.8,836.3 1225.2,827.5 1238.0,825.0 C1250.8,822.5 1270.9,825.0 1277.5,825.0"/>
<path d="M1337.0,825.0 C1338.7,825.1 1339.8,829.8 1347.0,825.6 C1354.2,821.4 1369.1,807.8 1380.0,800.0 C1390.9,792.2 1402.5,786.2 1412.5,779.0 C1422.5,771.8 1434.9,760.7 1440.0,757.0 C1445.1,753.3 1440.2,760.5 1443.0,757.0 C1445.8,753.5 1450.3,741.0 1457.0,736.0 C1463.7,731.0 1473.5,730.0 1483.0,727.0 C1492.5,724.0 1504.0,719.2 1514.0,718.0 C1524.0,716.8 1533.9,721.3 1543.0,720.0 C1552.1,718.7 1560.5,715.7 1568.5,710.0 C1576.5,704.3 1585.9,694.8 1591.0,686.0 C1596.1,677.2 1591.3,667.3 1599.0,657.0 C1606.7,646.7 1627.0,633.5 1637.0,624.0 C1647.0,614.5 1651.8,606.5 1659.0,600.0 C1666.2,593.5 1676.5,587.5 1680.0,585.0"/>
<path d="M960.0,520.0 C965.0,518.3 977.7,512.2 990.0,510.0 C1002.3,507.8 1018.2,509.0 1034.0,507.0 C1049.8,505.0 1073.7,499.2 1085.0,498.0 C1096.3,496.8 1096.3,498.2 1102.0,500.0 C1107.7,501.8 1113.8,505.7 1119.0,509.0 C1124.2,512.3 1130.7,518.2 1133.0,520.0"/>
<path d="M1563.0,566.0 C1571.0,563.7 1598.3,557.3 1611.0,552.0 C1623.7,546.7 1627.5,539.0 1639.0,534.0 C1650.5,529.0 1673.2,524.0 1680.0,522.0"/>
<path d="M963.0,823.0 C965.8,823.8 974.3,825.4 980.0,828.0 C985.7,830.6 990.8,834.9 997.0,838.6 C1003.2,842.4 1009.2,848.5 1017.4,850.5 C1025.6,852.5 1041.2,850.5 1046.0,850.5"/>
<path d="M946.0,700.0 C948.3,693.3 955.7,674.8 960.0,660.0 C964.3,645.2 967.0,623.5 972.0,611.0 C977.0,598.5 983.7,593.5 990.0,585.0 C996.3,576.5 1006.7,564.2 1010.0,560.0"/>
<path d="M1012.0,600.0 C1012.5,606.7 1013.7,626.7 1015.0,640.0 C1016.3,653.3 1017.5,670.0 1020.0,680.0 C1022.5,690.0 1028.3,696.7 1030.0,700.0"/>
<path d="M946.0,722.0 C942.1,725.7 930.6,736.2 922.6,744.0 C914.6,751.8 899.8,761.2 898.0,769.0 C896.2,776.8 908.0,784.2 912.0,791.0 C916.0,797.8 920.3,806.8 922.0,810.0"/>
<path d="M1030.0,600.0 L1040.0,648.0"/>
<path d="M1053.0,729.0 C1058.3,727.5 1077.3,715.3 1085.0,720.0 C1092.7,724.7 1096.7,750.8 1099.0,757.0"/>
</g>
<g font-family="Liberation Sans, sans-serif" font-size="10" text-anchor="middle" fill="#3c4043">
<rect x="563.5" y="468.0" width="17" height="14" rx="7" fill="#fff" stroke="#5f6368" stroke-width="1"/>
<text x="572.0" y="478.6">71</text>
<rect x="736.5" y="565.0" width="17" height="14" rx="7" fill="#fff" stroke="#5f6368" stroke-width="1"/>
<text x="745.0" y="575.6">71</text>
<rect x="1019.1" y="729.5" width="17" height="14" rx="7" fill="#fff" stroke="#5f6368" stroke-width="1"/>
<text x="1027.6" y="740.1">71</text>
<rect x="1000.5" y="367.0" width="17" height="14" rx="7" fill="#fff" stroke="#5f6368" stroke-width="1"/>
<text x="1009.0" y="377.6">29</text>
<rect x="1113.5" y="410.5" width="22" height="14" rx="7" fill="#fff" stroke="#5f6368" stroke-width="1"/>
<text x="1124.5" y="421.1">130</text>
<rect x="1116.0" y="562.0" width="22" height="14" rx="7" fill="#fff" stroke="#5f6368" stroke-width="1"/>
<text x="1127.0" y="572.6">130</text>
<rect x="1071.0" y="768.7" width="22" height="14" rx="7" fill="#fff" stroke="#5f6368" stroke-width="1"/>
<text x="1082.0" y="779.3">130</text>
<rect x="1032.5" y="501.0" width="17" height="14" rx="7" fill="#fff" stroke="#5f6368" stroke-width="1"/>
<text x="1041.0" y="511.6">45</text>
<rect x="1257.1" y="479.0" width="17" height="14" rx="7" fill="#fff" stroke="#5f6368" stroke-width="1"/>
<text x="1265.6" y="489.6">95</text>
<rect x="1271.5" y="554.0" width="17" height="14" rx="7" fill="#fff" stroke="#5f6368" stroke-width="1"/>
<text x="1280.0" y="564.6">95</text>
<rect x="1314.1" y="696.0" width="17" height="14" rx="7" fill="#fff" stroke="#5f6368" stroke-width="1"/>
<text x="1322.6" y="706.6">95</text>
<rect x="1319.2" y="796.0" width="17" height="14" rx="7" fill="#fff" stroke="#5f6368" stroke-width="1"/>
<text x="1327.7" y="806.6">95</text>
<rect x="1566.0" y="697.0" width="17" height="14" rx="7" fill="#fff" stroke="#5f6368" stroke-width="1"/>
<text x="1574.5" y="707.6">21</text>
<rect x="1063.3" y="880.0" width="17" height="14" rx="7" fill="#fff" stroke="#5f6368" stroke-width="1"/>
<text x="1071.8" y="890.6">21</text>
<rect x="997.9" y="916.6" width="17" height="14" rx="7" fill="#fff" stroke="#5f6368" stroke-width="1"/>
<text x="1006.4" y="927.2">21</text>
<rect x="1280.9" y="818.0" width="17" height="14" rx="7" fill="#fff" stroke="#5f6368" stroke-width="1"/>
<text x="1289.4" y="828.6">21</text>
<rect x="961.0" y="604.0" width="22" height="14" rx="7" fill="#fff" stroke="#5f6368" stroke-width="1"/>
<text x="972.0" y="614.6">360</text>
<rect x="952.5" y="695.5" width="16" height="14" rx="7" fill="#fff" stroke="#5f6368" stroke-width="1"/>
<text x="960.5" y="706.1">1</text>
<rect x="1331.0" y="942.0" width="22" height="14" rx="7" fill="#fff" stroke="#5f6368" stroke-width="1"/>
<text x="1342.0" y="952.6">304</text>
<rect x="1220.5" y="340.0" width="17" height="14" rx="7" fill="#fff" stroke="#5f6368" stroke-width="1"/>
<text x="1229.0" y="350.6">95</text>
<path d="M607.0,386.0 Q610.8,384.0 616.0,386.0 Q621.2,384.0 625.0,386.0 Q627.5,388.5 626.5,392.5 Q626.5,400.0 616.0,401.5 Q605.5,400.0 605.5,392.5 Q604.5,388.5 607.0,386.0Z" fill="#fff" stroke="#5f6368" stroke-width="1"/>
<text x="616.0" y="396.8">281</text>
<path d="M524.0,608.0 Q527.8,606.0 533.0,608.0 Q538.2,606.0 542.0,608.0 Q544.5,610.5 543.5,614.5 Q543.5,622.0 533.0,623.5 Q522.5,622.0 522.5,614.5 Q521.5,610.5 524.0,608.0Z" fill="#fff" stroke="#5f6368" stroke-width="1"/>
<text x="533.0" y="618.8">281</text>
<path d="M514.6,780.6 Q518.4,778.6 523.6,780.6 Q528.9,778.6 532.6,780.6 Q535.1,783.1 534.1,787.1 Q534.1,794.6 523.6,796.1 Q513.1,794.6 513.1,787.1 Q512.1,783.1 514.6,780.6Z" fill="#fff" stroke="#5f6368" stroke-width="1"/>
<text x="523.6" y="791.4">281</text>
<path d="M499.0,882.0 Q502.8,880.0 508.0,882.0 Q513.2,880.0 517.0,882.0 Q519.5,884.5 518.5,888.5 Q518.5,896.0 508.0,897.5 Q497.5,896.0 497.5,888.5 Q496.5,884.5 499.0,882.0Z" fill="#fff" stroke="#5f6368" stroke-width="1"/>
<text x="508.0" y="892.8">281</text>
<path d="M910.0,372.0 Q913.8,370.0 919.0,372.0 Q924.2,370.0 928.0,372.0 Q930.5,374.5 929.5,378.5 Q929.5,386.0 919.0,387.5 Q908.5,386.0 908.5,378.5 Q907.5,374.5 910.0,372.0Z" fill="#fff" stroke="#5f6368" stroke-width="1"/>
<text x="919.0" y="382.8">183</text>
<path d="M974.0,535.0 Q977.8,533.0 983.0,535.0 Q988.2,533.0 992.0,535.0 Q994.5,537.5 993.5,541.5 Q993.5,549.0 983.0,550.5 Q972.5,549.0 972.5,541.5 Q971.5,537.5 974.0,535.0Z" fill="#fff" stroke="#5f6368" stroke-width="1"/>
<text x="983.0" y="545.8">183</text>
<path d="M1034.0,795.0 Q1037.8,793.0 1043.0,795.0 Q1048.2,793.0 1052.0,795.0 Q1054.5,797.5 1053.5,801.5 Q1053.5,809.0 1043.0,810.5 Q1032.5,809.0 1032.5,801.5 Q1031.5,797.5 1034.0,795.0Z" fill="#fff" stroke="#5f6368" stroke-width="1"/>
<text x="1043.0" y="805.8">183</text>
<path d="M1021.0,603.0 Q1024.8,601.0 1030.0,603.0 Q1035.2,601.0 1039.0,603.0 Q1041.5,605.5 1040.5,609.5 Q1040.5,617.0 1030.0,618.5 Q1019.5,617.0 1019.5,609.5 Q1018.5,605.5 1021.0,603.0Z" fill="#fff" stroke="#5f6368" stroke-width="1"/>
<text x="1030.0" y="613.8">183</text>
<path d="M408.0,698.0 Q411.8,696.0 417.0,698.0 Q422.2,696.0 426.0,698.0 Q428.5,700.5 427.5,704.5 Q427.5,712.0 417.0,713.5 Q406.5,712.0 406.5,704.5 Q405.5,700.5 408.0,698.0Z" fill="#fff" stroke="#5f6368" stroke-width="1"/>
<text x="417.0" y="708.8">290</text>
<path d="M519.0,706.0 Q522.8,704.0 528.0,706.0 Q533.2,704.0 537.0,706.0 Q539.5,708.5 538.5,712.5 Q538.5,720.0 528.0,721.5 Q517.5,720.0 517.5,712.5 Q516.5,708.5 519.0,706.0Z" fill="#fff" stroke="#5f6368" stroke-width="1"/>
<text x="528.0" y="716.8">290</text>
<path d="M852.0,716.0 Q855.8,714.0 861.0,716.0 Q866.2,714.0 870.0,716.0 Q872.5,718.5 871.5,722.5 Q871.5,730.0 861.0,731.5 Q850.5,730.0 850.5,722.5 Q849.5,718.5 852.0,716.0Z" fill="#fff" stroke="#5f6368" stroke-width="1"/>
<text x="861.0" y="726.8">290</text>
<path d="M1090.0,627.5 Q1093.8,625.5 1099.0,627.5 Q1104.2,625.5 1108.0,627.5 Q1110.5,630.0 1109.5,634.0 Q1109.5,641.5 1099.0,643.0 Q1088.5,641.5 1088.5,634.0 Q1087.5,630.0 1090.0,627.5Z" fill="#fff" stroke="#5f6368" stroke-width="1"/>
<text x="1099.0" y="638.3">290</text>
<path d="M1421.5,716.5 Q1425.2,714.5 1430.5,716.5 Q1435.8,714.5 1439.5,716.5 Q1442.0,719.0 1441.0,723.0 Q1441.0,730.5 1430.5,732.0 Q1420.0,730.5 1420.0,723.0 Q1419.0,719.0 1421.5,716.5Z" fill="#fff" stroke="#5f6368" stroke-width="1"/>
<text x="1430.5" y="727.3">290</text>
<path d="M1653.0,765.4 Q1656.8,763.4 1662.0,765.4 Q1667.2,763.4 1671.0,765.4 Q1673.5,767.9 1672.5,771.9 Q1672.5,779.4 1662.0,780.9 Q1651.5,779.4 1651.5,771.9 Q1650.5,767.9 1653.0,765.4Z" fill="#fff" stroke="#5f6368" stroke-width="1"/>
<text x="1662.0" y="776.2">290</text>
<path d="M1105.1,451.0 Q1108.1,449.0 1112.6,451.0 Q1117.1,449.0 1120.1,451.0 Q1122.6,453.5 1121.6,457.5 Q1121.6,465.0 1112.6,466.5 Q1103.6,465.0 1103.6,457.5 Q1102.6,453.5 1105.1,451.0Z" fill="#fff" stroke="#5f6368" stroke-width="1"/>
<text x="1112.6" y="461.8">79</text>
<path d="M1559.5,507.0 Q1562.5,505.0 1567.0,507.0 Q1571.5,505.0 1574.5,507.0 Q1577.0,509.5 1576.0,513.5 Q1576.0,521.0 1567.0,522.5 Q1558.0,521.0 1558.0,513.5 Q1557.0,509.5 1559.5,507.0Z" fill="#fff" stroke="#5f6368" stroke-width="1"/>
<text x="1567.0" y="517.8">77</text>
<path d="M981.0,749.0 L996.0,749.0 L996.0,755.0 Q996.0,760.0 988.5,762.0 Q981.0,760.0 981.0,755.0Z" fill="#3b73c4" stroke="#fff" stroke-width="1"/>
<rect x="981.0" y="746.0" width="15" height="3.5" fill="#d93025"/>
<text x="988.5" y="759.0" fill="#fff" font-weight="bold" font-size="9.5">35</text>
<path d="M912.1,905.0 L927.1,905.0 L927.1,911.0 Q927.1,916.0 919.6,918.0 Q912.1,916.0 912.1,911.0Z" fill="#3b73c4" stroke="#fff" stroke-width="1"/>
<rect x="912.1" y="902.0" width="15" height="3.5" fill="#d93025"/>
<text x="919.6" y="915.0" fill="#fff" font-weight="bold" font-size="9.5">35</text>
</g>
<g font-family="Liberation Sans, sans-serif" font-size="12" fill="#26282b" stroke="#fff" stroke-width="2.6" stroke-linejoin="round" paint-order="stroke">
<text x="461" y="356" text-anchor="start">Kingsland</text>
<text x="492" y="416" text-anchor="start">Granite Shoals</text>
<text x="580" y="423.5" text-anchor="start">Marble Falls</text>
<text x="500" y="453" text-anchor="start">Horseshoe Bay</text>
<text x="542" y="545" text-anchor="start">Round</text>
<text x="533.6" y="557" text-anchor="start">Mountain</text>
<text x="676.5" y="442" text-anchor="start">Smithwick</text>
<text x="669" y="513" text-anchor="start">Spicewood</text>
<text x="904" y="423.5" text-anchor="start">Leander</text>
<text x="844" y="496" text-anchor="start">Jonestown</text>
<text x="920.5" y="487" text-anchor="start">Cedar Park</text>
<text x="796" y="526" text-anchor="start">Lago Vista</text>
<text x="847" y="349" text-anchor="start">Liberty Hill</text>
<text x="1024" y="377" text-anchor="start">Georgetown</text>
<text x="1144" y="372.5" text-anchor="start">Jonah</text>
<text x="1213" y="374" text-anchor="start">Circleville</text>
<text x="1241" y="430" text-anchor="start">Taylor</text>
<text x="1141" y="455" text-anchor="start">Hutto</text>
<text x="1024" y="485" text-anchor="start">Round Rock</text>
<text x="1068" y="531" text-anchor="start">Pflugerville</text>
<text x="1162" y="542.5" text-anchor="start">Cele</text>
<text x="1247" y="527" text-anchor="start">Coupland</text>
<text x="1326" y="414" text-anchor="start">Thrall</text>
<text x="1319" y="442" text-anchor="start">Noack</text>
<text x="1537" y="357" text-anchor="start">Rockdale</text>
<text x="1537" y="379" text-anchor="start">Praesel</text>
<text x="1382" y="393" text-anchor="start">Thorndale</text>
<text x="1498" y="436" text-anchor="start">Alcoa</text>
<text x="1541" y="494.5" text-anchor="start">Tanglewood</text>
<text x="596" y="595" text-anchor="start">Cypress Mill</text>
<text x="473" y="685.5" text-anchor="start">Johnson City</text>
<text x="380" y="715" text-anchor="start">Hye</text>
<text x="346" y="720" text-anchor="end">Stonewall</text>
<text x="352" y="756" text-anchor="start">Albert</text>
<text x="323" y="577" text-anchor="end">Willow City</text>
<text x="834" y="565" text-anchor="start">Hudson Bend</text>
<text x="799" y="606" text-anchor="start">Lakeway</text>
<text x="828" y="660" text-anchor="start">Bee Cave</text>
<text x="950" y="661" text-anchor="start">West</text>
<text x="939" y="673" text-anchor="start">Lake Hills</text>
<text x="917" y="728" text-anchor="start">Sunset Valley</text>
<text x="729" y="754" text-anchor="start">Dripping</text>
<text x="731" y="766.4" text-anchor="start">Springs</text>
<text x="643" y="756" text-anchor="start">Henly</text>
<text x="1146" y="571.6" text-anchor="start">New Sweden</text>
<text x="1130.5" y="630" text-anchor="start">Manor</text>
<text x="1274" y="622.6" text-anchor="start">Elgin</text>
<text x="1214.6" y="649" text-anchor="start">Littig</text>
<text x="1090.5" y="711" text-anchor="start">Hornsby Bend</text>
<text x="1056.5" y="744" text-anchor="start">Del Valle</text>
<text x="1290" y="724.6" text-anchor="start">Sayersville</text>
<text x="1528" y="562" text-anchor="start">Lexington</text>
<text x="1442.5" y="585.4" text-anchor="start">Blue</text>
<text x="1629" y="597" text-anchor="start">Old Dimebox</text>
<text x="1670.6" y="616" text-anchor="start">Dime Box</text>
<text x="1508.5" y="651.5" text-anchor="start">Fedor</text>
<text x="1364.4" y="679" text-anchor="start">McDade</text>
<text x="1571" y="675.5" text-anchor="start">Lincoln Loebau</text>
<text x="1662" y="702" text-anchor="start">Sweet Home</text>
<text x="1615.7" y="730" text-anchor="start">Corinth</text>
<text x="1463" y="741.5" text-anchor="start">Paige</text>
<text x="483" y="840" text-anchor="start">Blanco</text>
<text x="403" y="951" text-anchor="start">Kendalia</text>
<text x="597.5" y="945" text-anchor="start">Fischer</text>
<text x="766" y="817" text-anchor="start">Driftwood</text>
<text x="913" y="803" text-anchor="start">Manchaca</text>
<text x="920.5" y="853" text-anchor="start">Buda</text>
<text x="703" y="900" text-anchor="start">Woodcreek</text>
<text x="715" y="927" text-anchor="start">Wimberley</text>
<text x="897.6" y="934" text-anchor="start">Kyle</text>
<text x="957" y="961" text-anchor="start">Uhland</text>
<text x="985" y="846" text-anchor="start">Creedmoor</text>
<text x="1126" y="760.4" text-anchor="start">Garfield</text>
<text x="1182" y="812" text-anchor="start">Wyldwood</text>
<text x="1306.5" y="828.4" text-anchor="start">Bastrop</text>
<text x="1156" y="849.7" text-anchor="start">Cedar Creek</text>
<text x="1006.4" y="875" text-anchor="start">Mustang Ridge</text>
<text x="1287" y="887" text-anchor="start">Clearview</text>
<text x="1221.4" y="928.7" text-anchor="start">Rockne</text>
<text x="1205" y="959" text-anchor="start">Red Rock</text>
<text x="1313" y="760" text-anchor="start">Camp Swift</text>
<text x="1355" y="778.4" text-anchor="start">Circle D-KC</text>
<text x="1365" y="790.4" text-anchor="start">Estates</text>
<text x="1370.4" y="866" text-anchor="start">Alum Creek</text>
<text x="1548" y="814.5" text-anchor="start">Serbin</text>
<text x="1610.6" y="877" text-anchor="start">Warda</text>
<text x="1418.5" y="917" text-anchor="start">Smithville</text>
<text x="1523" y="916.5" text-anchor="start">Winchester</text>
<text x="1439" y="936" text-anchor="start">Colorado</text>
<text x="1474" y="952.5" text-anchor="start">Kirtley</text>
<text x="1609.7" y="956" text-anchor="start">Rabbs Prairie</text>
<text x="1586.6" y="765.6" text-anchor="start">Giddings</text>
<text x="1513.7" y="761.3" text-anchor="start">Hills</text>
</g>
<g font-family="Liberation Sans, sans-serif" font-size="13" fill="#27874a" stroke="#fff" stroke-width="2" stroke-linejoin="round" paint-order="stroke" text-anchor="middle" opacity="0.95">
<text x="786" y="400.0">Balcones</text>
<text x="786" y="414.3">Canyonlands</text>
<text x="786" y="428.6">National</text>
<text x="786" y="442.9">Wildlife…</text>
</g>
<text x="1012" y="696" font-family="Liberation Sans, sans-serif" font-size="16.5" font-weight="bold" fill="#202124" stroke="#fff" stroke-width="2.6" stroke-linejoin="round" paint-order="stroke" text-anchor="middle">Austin</text>
<g font-family="Liberation Sans, sans-serif" font-size="14" font-weight="bold" fill="#fff" text-anchor="middle">
<g transform="translate(998.0,568.0)"><path d="M0,24.4 C-1.5,20 -3,17 -7,13 C-11,9 -12.9,5 -12.9,0 A12.9,12.9 0 0 1 12.9,0 C12.9,5 11,9 7,13 C3,17 1.5,20 0,24.4Z" fill="#ea4335" stroke="#b1261c" stroke-width="1"/></g>
<g transform="translate(1011.0,571.0)"><path d="M0,24.4 C-1.5,20 -3,17 -7,13 C-11,9 -12.9,5 -12.9,0 A12.9,12.9 0 0 1 12.9,0 C12.9,5 11,9 7,13 C3,17 1.5,20 0,24.4Z" fill="#ea4335" stroke="#b1261c" stroke-width="1"/><text y="5.2">41</text></g>
<g transform="translate(1078.0,473.0)"><path d="M0,24.4 C-1.5,20 -3,17 -7,13 C-11,9 -12.9,5 -12.9,0 A12.9,12.9 0 0 1 12.9,0 C12.9,5 11,9 7,13 C3,17 1.5,20 0,24.4Z" fill="#ea4335" stroke="#b1261c" stroke-width="1"/></g>
<g transform="translate(1072.0,469.0)"><path d="M0,24.4 C-1.5,20 -3,17 -7,13 C-11,9 -12.9,5 -12.9,0 A12.9,12.9 0 0 1 12.9,0 C12.9,5 11,9 7,13 C3,17 1.5,20 0,24.4Z" fill="#ea4335" stroke="#b1261c" stroke-width="1"/><text y="5.2">34</text></g>
<g transform="translate(1130.5,464.0)"><path d="M0,24.4 C-1.5,20 -3,17 -7,13 C-11,9 -12.9,5 -12.9,0 A12.9,12.9 0 0 1 12.9,0 C12.9,5 11,9 7,13 C3,17 1.5,20 0,24.4Z" fill="#ea4335" stroke="#b1261c" stroke-width="1"/></g>
<g transform="translate(1122.0,483.0)"><path d="M0,24.4 C-1.5,20 -3,17 -7,13 C-11,9 -12.9,5 -12.9,0 A12.9,12.9 0 0 1 12.9,0 C12.9,5 11,9 7,13 C3,17 1.5,20 0,24.4Z" fill="#ea4335" stroke="#b1261c" stroke-width="1"/></g>
<g transform="translate(1125.0,469.0)"><path d="M0,24.4 C-1.5,20 -3,17 -7,13 C-11,9 -12.9,5 -12.9,0 A12.9,12.9 0 0 1 12.9,0 C12.9,5 11,9 7,13 C3,17 1.5,20 0,24.4Z" fill="#ea4335" stroke="#b1261c" stroke-width="1"/><text y="5.2">38</text></g>
<g transform="translate(1044.0,453.0)"><path d="M0,24.4 C-1.5,20 -3,17 -7,13 C-11,9 -12.9,5 -12.9,0 A12.9,12.9 0 0 1 12.9,0 C12.9,5 11,9 7,13 C3,17 1.5,20 0,24.4Z" fill="#ea4335" stroke="#b1261c" stroke-width="1"/><text y="5.2">49</text></g>
<g transform="translate(936.0,498.0)"><path d="M0,24.4 C-1.5,20 -3,17 -7,13 C-11,9 -12.9,5 -12.9,0 A12.9,12.9 0 0 1 12.9,0 C12.9,5 11,9 7,13 C3,17 1.5,20 0,24.4Z" fill="#ea4335" stroke="#b1261c" stroke-width="1"/><text y="5.2">48</text></g>
<g transform="translate(979.0,511.0)"><path d="M0,24.4 C-1.5,20 -3,17 -7,13 C-11,9 -12.9,5 -12.9,0 A12.9,12.9 0 0 1 12.9,0 C12.9,5 11,9 7,13 C3,17 1.5,20 0,24.4Z" fill="#ea4335" stroke="#b1261c" stroke-width="1"/><text y="5.2">27</text></g>
<g transform="translate(1073.5,504.0)"><path d="M0,24.4 C-1.5,20 -3,17 -7,13 C-11,9 -12.9,5 -12.9,0 A12.9,12.9 0 0 1 12.9,0 C12.9,5 11,9 7,13 C3,17 1.5,20 0,24.4Z" fill="#ea4335" stroke="#b1261c" stroke-width="1"/><text y="5.2">25</text></g>
<g transform="translate(1046.6,567.7)"><path d="M0,24.4 C-1.5,20 -3,17 -7,13 C-11,9 -12.9,5 -12.9,0 A12.9,12.9 0 0 1 12.9,0 C12.9,5 11,9 7,13 C3,17 1.5,20 0,24.4Z" fill="#ea4335" stroke="#b1261c" stroke-width="1"/><text y="5.2">12</text></g>
<g transform="translate(1050.0,541.0)"><path d="M0,24.4 C-1.5,20 -3,17 -7,13 C-11,9 -12.9,5 -12.9,0 A12.9,12.9 0 0 1 12.9,0 C12.9,5 11,9 7,13 C3,17 1.5,20 0,24.4Z" fill="#ea4335" stroke="#b1261c" stroke-width="1"/><text y="5.2">23</text></g>
<g transform="translate(1066.0,552.0)"><path d="M0,24.4 C-1.5,20 -3,17 -7,13 C-11,9 -12.9,5 -12.9,0 A12.9,12.9 0 0 1 12.9,0 C12.9,5 11,9 7,13 C3,17 1.5,20 0,24.4Z" fill="#ea4335" stroke="#b1261c" stroke-width="1"/><text y="5.2">4</text></g>
<g transform="translate(1089.0,549.0)"><path d="M0,24.4 C-1.5,20 -3,17 -7,13 C-11,9 -12.9,5 -12.9,0 A12.9,12.9 0 0 1 12.9,0 C12.9,5 11,9 7,13 C3,17 1.5,20 0,24.4Z" fill="#ea4335" stroke="#b1261c" stroke-width="1"/><text y="5.2">1</text></g>
<g transform="translate(1031.0,633.0)"><path d="M0,24.4 C-1.5,20 -3,17 -7,13 C-11,9 -12.9,5 -12.9,0 A12.9,12.9 0 0 1 12.9,0 C12.9,5 11,9 7,13 C3,17 1.5,20 0,24.4Z" fill="#ea4335" stroke="#b1261c" stroke-width="1"/><text y="5.2">16</text></g>
<g transform="translate(1021.6,617.8)"><path d="M0,24.4 C-1.5,20 -3,17 -7,13 C-11,9 -12.9,5 -12.9,0 A12.9,12.9 0 0 1 12.9,0 C12.9,5 11,9 7,13 C3,17 1.5,20 0,24.4Z" fill="#ea4335" stroke="#b1261c" stroke-width="1"/><text y="5.2">32</text></g>
<g transform="translate(1012.0,618.5)"><path d="M0,24.4 C-1.5,20 -3,17 -7,13 C-11,9 -12.9,5 -12.9,0 A12.9,12.9 0 0 1 12.9,0 C12.9,5 11,9 7,13 C3,17 1.5,20 0,24.4Z" fill="#ea4335" stroke="#b1261c" stroke-width="1"/><text y="5.2">33</text></g>
<g transform="translate(1013.0,602.0)"><path d="M0,24.4 C-1.5,20 -3,17 -7,13 C-11,9 -12.9,5 -12.9,0 A12.9,12.9 0 0 1 12.9,0 C12.9,5 11,9 7,13 C3,17 1.5,20 0,24.4Z" fill="#ea4335" stroke="#b1261c" stroke-width="1"/><text y="5.2">50</text></g>
<g transform="translate(1052.0,610.0)"><path d="M0,24.4 C-1.5,20 -3,17 -7,13 C-11,9 -12.9,5 -12.9,0 A12.9,12.9 0 0 1 12.9,0 C12.9,5 11,9 7,13 C3,17 1.5,20 0,24.4Z" fill="#ea4335" stroke="#b1261c" stroke-width="1"/><text y="5.2">26</text></g>
<g transform="translate(1067.0,629.0)"><path d="M0,24.4 C-1.5,20 -3,17 -7,13 C-11,9 -12.9,5 -12.9,0 A12.9,12.9 0 0 1 12.9,0 C12.9,5 11,9 7,13 C3,17 1.5,20 0,24.4Z" fill="#ea4335" stroke="#b1261c" stroke-width="1"/><text y="5.2">3</text></g>
<g transform="translate(1003.0,650.0)"><path d="M0,24.4 C-1.5,20 -3,17 -7,13 C-11,9 -12.9,5 -12.9,0 A12.9,12.9 0 0 1 12.9,0 C12.9,5 11,9 7,13 C3,17 1.5,20 0,24.4Z" fill="#ea4335" stroke="#b1261c" stroke-width="1"/><text y="5.2">15</text></g>
<g transform="translate(1032.0,674.0)"><path d="M0,24.4 C-1.5,20 -3,17 -7,13 C-11,9 -12.9,5 -12.9,0 A12.9,12.9 0 0 1 12.9,0 C12.9,5 11,9 7,13 C3,17 1.5,20 0,24.4Z" fill="#ea4335" stroke="#b1261c" stroke-width="1"/></g>
<g transform="translate(1036.5,657.0)"><path d="M0,24.4 C-1.5,20 -3,17 -7,13 C-11,9 -12.9,5 -12.9,0 A12.9,12.9 0 0 1 12.9,0 C12.9,5 11,9 7,13 C3,17 1.5,20 0,24.4Z" fill="#ea4335" stroke="#b1261c" stroke-width="1"/><text y="5.2">21</text></g>
<g transform="translate(1022.0,667.0)"><path d="M0,24.4 C-1.5,20 -3,17 -7,13 C-11,9 -12.9,5 -12.9,0 A12.9,12.9 0 0 1 12.9,0 C12.9,5 11,9 7,13 C3,17 1.5,20 0,24.4Z" fill="#ea4335" stroke="#b1261c" stroke-width="1"/><text y="5.2">4</text></g>
<g transform="translate(1006.7,665.0)"><path d="M0,24.4 C-1.5,20 -3,17 -7,13 C-11,9 -12.9,5 -12.9,0 A12.9,12.9 0 0 1 12.9,0 C12.9,5 11,9 7,13 C3,17 1.5,20 0,24.4Z" fill="#ea4335" stroke="#b1261c" stroke-width="1"/><text y="5.2">28</text></g>
<g transform="translate(946.0,625.0)"><path d="M0,24.4 C-1.5,20 -3,17 -7,13 C-11,9 -12.9,5 -12.9,0 A12.9,12.9 0 0 1 12.9,0 C12.9,5 11,9 7,13 C3,17 1.5,20 0,24.4Z" fill="#ea4335" stroke="#b1261c" stroke-width="1"/><text y="5.2">31</text></g>
<g transform="translate(954.0,667.0)"><path d="M0,24.4 C-1.5,20 -3,17 -7,13 C-11,9 -12.9,5 -12.9,0 A12.9,12.9 0 0 1 12.9,0 C12.9,5 11,9 7,13 C3,17 1.5,20 0,24.4Z" fill="#ea4335" stroke="#b1261c" stroke-width="1"/><text y="5.2">18</text></g>
<g transform="translate(909.0,695.0)"><path d="M0,24.4 C-1.5,20 -3,17 -7,13 C-11,9 -12.9,5 -12.9,0 A12.9,12.9 0 0 1 12.9,0 C12.9,5 11,9 7,13 C3,17 1.5,20 0,24.4Z" fill="#ea4335" stroke="#b1261c" stroke-width="1"/><text y="5.2">29</text></g>
<g transform="translate(980.0,688.0)"><path d="M0,24.4 C-1.5,20 -3,17 -7,13 C-11,9 -12.9,5 -12.9,0 A12.9,12.9 0 0 1 12.9,0 C12.9,5 11,9 7,13 C3,17 1.5,20 0,24.4Z" fill="#ea4335" stroke="#b1261c" stroke-width="1"/></g>
<g transform="translate(987.0,695.0)"><path d="M0,24.4 C-1.5,20 -3,17 -7,13 C-11,9 -12.9,5 -12.9,0 A12.9,12.9 0 0 1 12.9,0 C12.9,5 11,9 7,13 C3,17 1.5,20 0,24.4Z" fill="#ea4335" stroke="#b1261c" stroke-width="1"/><text y="5.2">9</text></g>
<g transform="translate(935.5,742.0)"><path d="M0,24.4 C-1.5,20 -3,17 -7,13 C-11,9 -12.9,5 -12.9,0 A12.9,12.9 0 0 1 12.9,0 C12.9,5 11,9 7,13 C3,17 1.5,20 0,24.4Z" fill="#ea4335" stroke="#b1261c" stroke-width="1"/></g>
<g transform="translate(935.0,728.6)"><path d="M0,24.4 C-1.5,20 -3,17 -7,13 C-11,9 -12.9,5 -12.9,0 A12.9,12.9 0 0 1 12.9,0 C12.9,5 11,9 7,13 C3,17 1.5,20 0,24.4Z" fill="#ea4335" stroke="#b1261c" stroke-width="1"/><text y="5.2">13</text></g>
<g transform="translate(1112.0,674.0)"><path d="M0,24.4 C-1.5,20 -3,17 -7,13 C-11,9 -12.9,5 -12.9,0 A12.9,12.9 0 0 1 12.9,0 C12.9,5 11,9 7,13 C3,17 1.5,20 0,24.4Z" fill="#ea4335" stroke="#b1261c" stroke-width="1"/></g>
<g transform="translate(1110.0,677.0)"><path d="M0,24.4 C-1.5,20 -3,17 -7,13 C-11,9 -12.9,5 -12.9,0 A12.9,12.9 0 0 1 12.9,0 C12.9,5 11,9 7,13 C3,17 1.5,20 0,24.4Z" fill="#ea4335" stroke="#b1261c" stroke-width="1"/><text y="5.2">40</text></g>
<g transform="translate(1063.0,707.0)"><path d="M0,24.4 C-1.5,20 -3,17 -7,13 C-11,9 -12.9,5 -12.9,0 A12.9,12.9 0 0 1 12.9,0 C12.9,5 11,9 7,13 C3,17 1.5,20 0,24.4Z" fill="#ea4335" stroke="#b1261c" stroke-width="1"/><text y="5.2">22</text></g>
<g transform="translate(1112.0,733.0)"><path d="M0,24.4 C-1.5,20 -3,17 -7,13 C-11,9 -12.9,5 -12.9,0 A12.9,12.9 0 0 1 12.9,0 C12.9,5 11,9 7,13 C3,17 1.5,20 0,24.4Z" fill="#ea4335" stroke="#b1261c" stroke-width="1"/><text y="5.2">19</text></g>
<g transform="translate(1068.0,766.0)"><path d="M0,24.4 C-1.5,20 -3,17 -7,13 C-11,9 -12.9,5 -12.9,0 A12.9,12.9 0 0 1 12.9,0 C12.9,5 11,9 7,13 C3,17 1.5,20 0,24.4Z" fill="#ea4335" stroke="#b1261c" stroke-width="1"/><text y="5.2">11</text></g>
</g>
</svg>
<div style="position:absolute;left:10px;top:10px;width:173px;height:41px;background:#fff;border-radius:2px;box-shadow:0 1px 4px rgba(0,0,0,.3)">
<div style="position:absolute;left:0;top:0;width:70px;height:41px;line-height:43px;text-align:center;font-size:18px;font-weight:bold;color:#000">Map</div>
<div style="position:absolute;left:70px;top:0;width:1px;height:41px;background:#e6e6e6"></div>
<div style="position:absolute;left:71px;top:0;width:102px;height:41px;line-height:43px;text-align:center;font-size:18px;color:#565656">Satellite</div>
</div>
<div style="position:absolute;left:1311px;top:10px;width:41px;height:83px;background:#fff;border-radius:2px;box-shadow:0 1px 4px rgba(0,0,0,.3)">
<div style="position:absolute;left:12px;top:19px;width:18px;height:4px;background:#666"></div>
<div style="position:absolute;left:19px;top:12px;width:4px;height:18px;background:#666"></div>
<div style="position:absolute;left:6px;top:41px;width:30px;height:1px;background:#e6e6e6"></div>
<div style="position:absolute;left:12px;top:61px;width:18px;height:4px;background:#666"></div>
</div>
</div>

<div class="btn" style="left:317px;top:983px;width:279px;height:40px;line-height:40px;letter-spacing:3.32px;font-size:13px;text-align:left;padding-left:12.5px">DOWNLOAD RESULTS (PDF)</div>

<table>
<tr><th style="width:61px">#</th><th style="width:128px">TYPE</th><th style="width:367px">ADDRESS <small>(CLICK TO VIEW)</small></th><th style="width:139px">PRICE</th><th style="width:104px">BLDG SF</th><th style="width:160px">BLDG PRICE/SF</th><th style="width:128px">LOT ACRES</th><th style="width:127px">LOT SF</th><th>LOT PRICE/SF</th></tr>
<tr><td class="n">1</td><td>Land</td><td>13500 Lazyridge Drive</td><td>$1,100,000</td><td>--</td><td>--</td><td>4.670</td><td>203,425</td><td>$5.41</td></tr>
<tr><td class="n">2</td><td>Retail</td><td>3004 West Slaughter Lane</td><td>$1,960,000</td><td>1,770</td><td>$1107.34</td><td>--</td><td>39,248</td><td>$49.93</td></tr>
<tr><td class="n">3</td><td>Land</td><td>4720 Loyola Lane</td><td>$2,750,000</td><td>--</td><td>--</td><td>2.852</td><td>124,233</td><td>$22.14</td></tr>
<tr><td class="n">4</td><td>Land</td><td>12431 Tech Ridge Boulevard</td><td>$599,000</td><td>--</td><td>--</td><td>1.100</td><td>47,916</td><td>$12.50</td></tr>
<tr><td class="n">5</td><td>Land</td><td></td><td></td><td></td><td></td><td></td><td></td><td></td></tr>
</table>
</body></html>
